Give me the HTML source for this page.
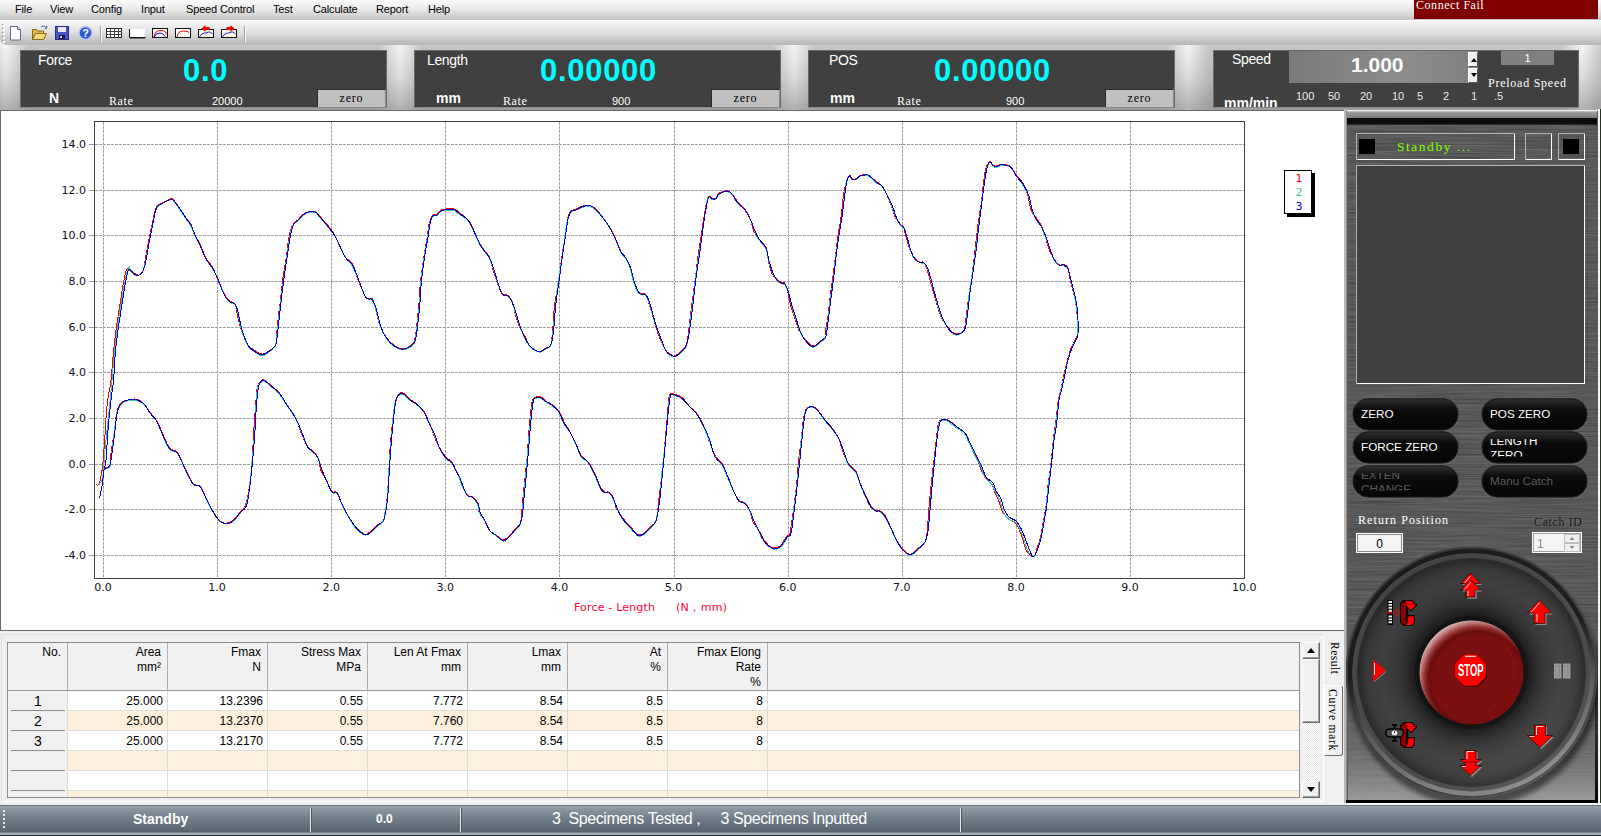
<!DOCTYPE html>
<html><head><meta charset="utf-8"><title>Tester</title>
<style>
*{box-sizing:border-box}
html,body{margin:0;padding:0}
body{width:1601px;height:836px;overflow:hidden;position:relative;background:#f0f0f0;font-family:"Liberation Sans",sans-serif;font-size:12px;color:#000}
.abs{position:absolute}
.mono{font-family:"Liberation Mono",monospace}
#menubar{left:0;top:0;width:1601px;height:20px;background:linear-gradient(#fbfbfb 0,#ececec 40%,#c4c4c4 100%)}
#menubar span{position:absolute;top:3px;font-size:11px;color:#000;white-space:nowrap;letter-spacing:-0.15px}
#toolbar{left:0;top:20px;width:1601px;height:25px;border-bottom-left-radius:7px;background:linear-gradient(#f6f6f6 0,#e2e2e2 45%,#b6b6b6 100%);border-top:1px solid #fff}
#cfail{left:1414px;top:0;width:184px;height:19px;background:#800000;color:#fff;font-size:12px;line-height:10px;padding-left:2px;letter-spacing:0.55px;font-family:'Liberation Serif',serif}
#panels{left:0;top:45px;width:1601px;height:65px;background:
 linear-gradient(90deg,rgba(120,120,120,0) 0,rgba(120,120,120,.38) 22px,rgba(120,120,120,.38) 372px,rgba(120,120,120,0) 394px) 6px 0/394px 65px repeat-x,
 linear-gradient(#f6f6f6 0,#f2f2f2 5px,#dadada 35px,#b6b6b6 61px,#b4b4b4 65px)}
.pn{position:absolute;top:5px;height:58px;background:#404040;border:1px solid #6a6a6a;border-bottom-color:#8a8a8a;color:#fff;overflow:hidden}
.pn .lab{position:absolute;top:1px;font-size:14px;letter-spacing:-0.35px}
.pn .big{position:absolute;top:2px;letter-spacing:0.7px;color:#00ffff;font-weight:bold;font-size:31px;white-space:nowrap}
.pn .unit{position:absolute;font-weight:bold;font-size:14px;top:39px}
.pn .rate{position:absolute;top:43px;font-size:12px;font-family:'Liberation Serif',serif;letter-spacing:0.6px}
.pn .rv{position:absolute;top:44px;font-size:11px}
.pn .zero{position:absolute;right:0;top:38px;width:69px;height:19px;background:#c0c0c0;border:1px solid #2a2a2a;border-right-color:#888;border-bottom-color:#888;color:#000;font-size:12px;font-family:'Liberation Serif',serif;letter-spacing:0.8px;text-align:center;line-height:16px}
#chartbox{left:0;top:110px;width:1344px;height:521px;background:#fff;border:1px solid #696969;border-right:none}
.chart{position:absolute;left:0;top:108px}
#status{left:0;top:805px;width:1601px;height:31px;background:linear-gradient(#707476 0,#707476 1px,#9aa5af 1px,#8a96a1 4px,#6f7c87 14px,#5a6772 26px,#56636e 27px,#9ea9b2 28px,#a6b0b9 30px,#30363a 30px,#202428 31px);color:#fff}
#status .sep{position:absolute;top:3px;width:2px;height:24px;background:#e4e8ec;border-right:1px solid #4a5660}
#status span{position:absolute;white-space:nowrap}
/* table */
#grid{left:7px;top:642px;width:1293px;height:156px;background:#fff;border:1px solid #8c8c8c;overflow:hidden}
#ghead{position:absolute;left:0;top:0;width:1293px;height:48px;background:#f1f1f1;border-bottom:1px solid #9a9a9a}
.hc{position:absolute;top:0;height:47px;width:100px;border-right:1px solid #b0b0b0;text-align:right;padding:2px 6px 0 0;font-size:12px;line-height:15px;color:#000}
.row{position:absolute;left:60px;width:1233px;height:20px;border-bottom:1px solid #dcdcdc}
.row.alt{background:#fdf0dc}
.rh{position:absolute;left:0;width:60px;height:20px;background:#f1f1f1;text-align:center;font-size:14px;line-height:21px}
.rh:after{content:"";position:absolute;left:3px;right:3px;bottom:0;border-bottom:1px solid #8c8c8c}
.vl{position:absolute;top:48px;width:1px;height:110px;background:#dcdcdc}
.cell{position:absolute;width:100px;text-align:right;padding-right:5px;font-size:12px;line-height:21px;height:20px}

.sb{width:18px;background:#f0f0f0;border:1px solid #fff;border-right-color:#6a6a6a;border-bottom-color:#6a6a6a;box-shadow:inset -1px -1px 0 #a0a0a0}
.tri{position:absolute;left:4px;top:5px;width:0;height:0;border-style:solid;border-color:transparent}
.tri.up{border-width:0 4px 5px 4px;border-bottom-color:#000}
.tri.dn{border-width:5px 4px 0 4px;border-top-color:#000}
.vt{writing-mode:vertical-rl;font-size:10px;width:18px;line-height:16px;padding-top:3px;letter-spacing:0}
.spb{width:10px;height:15px;background:#f0f0f0;border:1px solid #fff;border-right-color:#555;border-bottom-color:#555}
.sp{top:39px;font-size:11px;color:#e8e8e8}
.vtx{font-family:'Liberation Serif',serif;font-size:11.5px;line-height:12px;letter-spacing:0.5px;white-space:nowrap;transform-origin:0 0;transform:rotate(90deg);color:#000}
/* right panel */
#rp{left:1346px;top:111px;width:252px;height:692px;background:#484848;overflow:hidden}
.btn{position:absolute;width:106px;height:31px;border-radius:16px;background:linear-gradient(#2c2c2c 0,#050505 45%,#0a0a0a 100%);box-shadow:0 0 0 1px #3a3a3a,0 1px 1px 1px #6a6a6a,inset 0 2px 3px #000;color:#fff;font-size:12px;overflow:hidden;padding-left:9px;line-height:29px;white-space:nowrap}
.btn.dis{color:#5a5a5a}
.btn.two{line-height:14px;white-space:normal}
.sunk{position:absolute;border:1px solid #fff;border-top-color:#a0a0a0;border-left-color:#a0a0a0}
</style></head>
<body>
<div id="menubar" class="abs">
<span style="left:15px">File</span><span style="left:50px">View</span><span style="left:91px">Config</span><span style="left:141px">Input</span><span style="left:186px">Speed Control</span><span style="left:273px">Test</span><span style="left:313px">Calculate</span><span style="left:376px">Report</span><span style="left:428px">Help</span>
</div>
<div id="cfail" class="abs">Connect Fail</div>
<div id="toolbar" class="abs"><svg class="abs" style="left:0;top:0" width="260" height="26" viewBox="0 21 260 26"><rect x="3" y="25" width="2" height="2" fill="#fff"/><rect x="2" y="24" width="1" height="1" fill="#909090"/><rect x="3" y="29" width="2" height="2" fill="#fff"/><rect x="2" y="28" width="1" height="1" fill="#909090"/><rect x="3" y="33" width="2" height="2" fill="#fff"/><rect x="2" y="32" width="1" height="1" fill="#909090"/><rect x="3" y="37" width="2" height="2" fill="#fff"/><rect x="2" y="36" width="1" height="1" fill="#909090"/><rect x="3" y="41" width="2" height="2" fill="#fff"/><rect x="2" y="40" width="1" height="1" fill="#909090"/><path d="M10.500 26.500h7l3 3v10.500h-10z" fill="#fff" stroke="#5a6a8a"/><path d="M17.500 26.500v3h3" fill="#dde" stroke="#5a6a8a"/><path d="M32.500 39.500v-10h4l1 1.500h6v8.500z" fill="#e8b848" stroke="#8a6a20"/><path d="M32.500 39.500l3-6h11l-3 6z" fill="#f8d878" stroke="#8a6a20"/><path d="M41 27q3-2.500 5 0.500" fill="none" stroke="#4a6a9a"/><path d="M44.500 29l2.500-1-0.500-2.500" fill="none" stroke="#4a6a9a"/><rect x="55.500" y="26.500" width="13" height="13" fill="#4a52c8" stroke="#2a2a88"/><rect x="58" y="27" width="8" height="5" fill="#e8e8f4"/><rect x="59" y="35" width="6" height="4" fill="#181830"/><rect x="60" y="36" width="2" height="2" fill="#d8d8e8"/><circle cx="85.500" cy="33" r="6.500" fill="#2a5ad8" stroke="#b8c8f0" stroke-width="1.500"/><text x="85.500" y="37" text-anchor="middle" font-family="Liberation Sans,sans-serif" font-weight="bold" font-size="11" fill="#fff">?</text><rect x="101" y="26" width="1" height="16" fill="#f8f8f8"/><rect x="100" y="26" width="1" height="16" fill="#a0a0a0"/><rect x="245" y="26" width="1" height="16" fill="#f8f8f8"/><rect x="244" y="26" width="1" height="16" fill="#a0a0a0"/><rect x="106.500" y="28.500" width="15" height="9" fill="#fff" stroke="#202020"/><path d="M106 31.500h16M106 34.500h16M110.500 28v10M114.500 28v10M118.500 28v10" stroke="#404040" fill="none"/><rect x="130" y="29" width="15" height="9" fill="#fff"/><path d="M129.500 29v8.500h16" stroke="#101010" fill="none" stroke-width="1"/><path d="M130 38h15" stroke="#101010"/><rect x="152.500" y="28.500" width="15" height="9" fill="#fff" stroke="#101010"/><path d="M154 37q1-7 7-6.500t5 4" stroke="#e00000" fill="none"/><path d="M154 37.500q2-5 6-4.500t5 3.500" stroke="#1010c0" fill="none"/><rect x="175.500" y="28.500" width="15" height="9" fill="#fff" stroke="#101010"/><path d="M177 37q1-6 6-6t6 1.500" stroke="#e00000" fill="none"/><rect x="198.5" y="29.500" width="15" height="8" fill="#fdf6e4" stroke="#101010"/><path d="M199.5 37q2-4 5-4t4-1 4 2" stroke="#2030d0" fill="none"/><path d="M201.5 28.500l4-3.500v2h4v3h-4v2z" fill="#f00000"/><rect x="221.5" y="29.500" width="15" height="8" fill="#fdf6e4" stroke="#101010"/><path d="M222.5 37q2-4 5-4t4-1 4 2" stroke="#2030d0" fill="none"/><path d="M234.5 28.500l-4-3.500v2h-4v3h4v2z" fill="#f00000"/></svg></div>
<div id="panels" class="abs">
 <div class="pn" style="left:20px;width:367px"><span class="lab" style="left:17px">Force</span><span class="big" style="left:162px">0.0</span><span class="unit" style="left:28px">N</span><span class="rate mono" style="left:88px">Rate</span><span class="rv" style="left:191px">20000</span><div class="zero mono">zero</div></div>
 <div class="pn" style="left:414px;width:367px"><span class="lab" style="left:12px">Length</span><span class="big" style="left:125px">0.00000</span><span class="unit" style="left:21px">mm</span><span class="rate mono" style="left:88px">Rate</span><span class="rv" style="left:197px">900</span><div class="zero mono">zero</div></div>
 <div class="pn" style="left:808px;width:367px"><span class="lab" style="left:20px">POS</span><span class="big" style="left:125px">0.00000</span><span class="unit" style="left:21px">mm</span><span class="rate mono" style="left:88px">Rate</span><span class="rv" style="left:197px">900</span><div class="zero mono">zero</div></div>
 <div class="pn" style="left:1213px;width:366px"><span class="lab" style="left:18px;top:0">Speed</span>
<div class="abs" style="left:75px;top:0;width:189px;height:32px;background:linear-gradient(90deg,#7a7a7a,#8c8c8c 60%,#808080)"></div>
<span class="abs" style="left:137px;top:2px;font-weight:bold;font-size:21px;color:#fff">1.000</span>
<div class="abs spb" style="left:254px;top:1px"><i class="tri up" style="left:2px;top:5px;border-width:0 3px 4px 3px"></i></div>
<div class="abs spb" style="left:254px;top:17px"><i class="tri dn" style="left:2px;top:4px;border-width:4px 3px 0 3px"></i></div>
<div class="abs" style="left:287px;top:0;width:53px;height:14px;background:#808080;color:#fff;font-size:11px;text-align:center;line-height:14px">1</div>
<span class="abs" style="left:274px;top:25px;font-size:12px;font-family:'Liberation Serif',serif;letter-spacing:0.75px;color:#fff;white-space:nowrap">Preload Speed</span>
<span class="abs" style="left:10px;top:44px;font-weight:bold;font-size:14px;color:#fff">mm/min</span>
<span class="abs sp" style="left:82px">100</span><span class="abs sp" style="left:114px">50</span><span class="abs sp" style="left:146px">20</span><span class="abs sp" style="left:178px">10</span><span class="abs sp" style="left:203px">5</span><span class="abs sp" style="left:229px">2</span><span class="abs sp" style="left:257px">1</span><span class="abs sp" style="left:280px">.5</span></div>
</div>
<div id="chartbox" class="abs"></div>
<svg class="chart" width="1345" height="525" viewBox="0 108 1345 525">
<style>.g{stroke:#a0a0a0;stroke-dasharray:3 1;shape-rendering:crispEdges}.al{font:11px "DejaVu Sans","Liberation Sans",sans-serif;fill:#101020}</style>
<g shape-rendering="crispEdges"><line x1="103.5" y1="122" x2="103.5" y2="578" class="g"/>
<line x1="217.5" y1="122" x2="217.5" y2="578" class="g"/>
<line x1="331.5" y1="122" x2="331.5" y2="578" class="g"/>
<line x1="445.5" y1="122" x2="445.5" y2="578" class="g"/>
<line x1="559.5" y1="122" x2="559.5" y2="578" class="g"/>
<line x1="674.5" y1="122" x2="674.5" y2="578" class="g"/>
<line x1="788.5" y1="122" x2="788.5" y2="578" class="g"/>
<line x1="902.5" y1="122" x2="902.5" y2="578" class="g"/>
<line x1="1016.5" y1="122" x2="1016.5" y2="578" class="g"/>
<line x1="1130.5" y1="122" x2="1130.5" y2="578" class="g"/>
<line x1="95" y1="555.5" x2="1244" y2="555.5" class="g"/>
<line x1="89" y1="555.5" x2="95" y2="555.5" stroke="#a0a0a0"/>
<line x1="95" y1="509.5" x2="1244" y2="509.5" class="g"/>
<line x1="89" y1="509.5" x2="95" y2="509.5" stroke="#a0a0a0"/>
<line x1="95" y1="464.5" x2="1244" y2="464.5" class="g"/>
<line x1="89" y1="464.5" x2="95" y2="464.5" stroke="#a0a0a0"/>
<line x1="95" y1="418.5" x2="1244" y2="418.5" class="g"/>
<line x1="89" y1="418.5" x2="95" y2="418.5" stroke="#a0a0a0"/>
<line x1="95" y1="372.5" x2="1244" y2="372.5" class="g"/>
<line x1="89" y1="372.5" x2="95" y2="372.5" stroke="#a0a0a0"/>
<line x1="95" y1="327.5" x2="1244" y2="327.5" class="g"/>
<line x1="89" y1="327.5" x2="95" y2="327.5" stroke="#a0a0a0"/>
<line x1="95" y1="281.5" x2="1244" y2="281.5" class="g"/>
<line x1="89" y1="281.5" x2="95" y2="281.5" stroke="#a0a0a0"/>
<line x1="95" y1="235.5" x2="1244" y2="235.5" class="g"/>
<line x1="89" y1="235.5" x2="95" y2="235.5" stroke="#a0a0a0"/>
<line x1="95" y1="190.5" x2="1244" y2="190.5" class="g"/>
<line x1="89" y1="190.5" x2="95" y2="190.5" stroke="#a0a0a0"/>
<line x1="95" y1="144.5" x2="1244" y2="144.5" class="g"/>
<line x1="89" y1="144.5" x2="95" y2="144.5" stroke="#a0a0a0"/>
<rect x="94.5" y="121.5" width="1150" height="457" fill="none" stroke="#404040"/></g>
<g shape-rendering="crispEdges"><polyline points="96.0,484.4 96.8,484.9 97.9,485.3 99.0,484.0 100.2,480.1 101.4,474.5 102.4,468.0 103.1,461.1 103.7,453.3 104.4,444.0 105.2,431.9 106.0,418.3 107.0,406.0 108.3,396.3 109.8,388.0 111.0,380.0 111.8,372.3 112.3,364.9 113.0,357.0 113.9,348.3 114.9,339.1 116.0,330.0 117.3,321.1 118.7,312.3 120.0,304.0 121.3,296.0 122.5,288.4 123.6,282.0 124.6,276.8 125.5,272.8 126.5,270.0 127.5,268.7 128.5,268.6 129.8,269.1 131.6,270.4 133.5,272.4 135.3,273.9 136.7,274.7 138.0,275.1 139.2,274.9 140.6,274.2 142.0,272.9 143.2,270.9 143.9,268.3 144.4,264.9 145.1,260.3 146.3,253.8 147.7,246.0 149.2,238.4 150.6,231.0 152.2,223.8 153.5,217.6 154.6,212.9 155.5,209.1 156.7,206.3 158.3,204.7 160.3,203.9 162.4,203.1 165.0,201.6 167.8,200.0 170.1,199.0 171.3,198.5 171.9,198.5 173.0,199.4 175.0,201.9 177.5,205.2 179.9,208.6 182.0,211.8 184.1,215.0 186.1,217.9 187.9,220.3 189.6,222.4 191.2,224.9 192.3,228.3 193.3,232.0 194.5,235.4 196.0,238.0 197.8,240.2 199.7,243.2 201.8,248.2 204.1,254.0 206.3,259.0 208.4,261.9 210.4,264.0 212.4,266.6 214.0,270.2 215.6,274.3 217.4,278.7 219.7,284.1 222.3,289.9 224.6,294.6 226.5,297.6 228.1,299.6 229.8,301.2 231.8,302.2 233.8,302.8 235.3,304.0 236.0,306.0 236.3,308.6 236.8,312.3 238.0,317.5 239.4,323.7 241.1,329.7 243.2,335.3 245.5,340.6 247.8,344.8 250.0,347.3 252.1,348.8 254.3,350.1 256.9,351.8 259.6,353.4 262.1,354.1 264.2,353.8 266.1,352.8 268.2,351.4 270.7,349.9 273.4,348.0 275.3,346.0 276.1,344.0 276.1,341.9 276.2,338.4 276.7,333.0 277.4,326.3 278.0,319.6 278.7,313.8 279.5,308.0 280.3,301.6 281.1,294.0 282.0,285.8 282.9,277.9 284.0,270.9 285.2,264.2 286.3,257.7 287.2,250.9 287.9,244.2 288.8,238.3 289.7,233.6 290.7,229.7 292.0,226.4 293.9,223.7 296.0,221.6 298.4,219.4 300.7,216.9 303.3,214.4 306.0,212.6 309.1,211.6 312.3,211.3 315.1,211.6 316.9,212.6 318.2,214.3 320.1,216.7 323.3,220.2 327.1,224.5 330.4,228.6 332.5,231.5 334.0,234.1 335.9,237.7 338.7,243.7 341.8,250.7 344.8,256.4 347.5,259.4 350.1,261.1 352.4,263.6 354.1,267.6 355.5,272.3 357.2,277.6 359.7,283.8 362.6,290.6 364.9,295.6 366.4,297.9 367.5,298.4 368.6,298.7 369.8,298.5 371.0,298.1 372.1,298.7 373.1,300.7 374.1,303.8 375.3,308.0 376.8,313.8 378.4,320.7 380.4,326.9 382.8,331.9 385.5,336.2 388.2,339.8 390.6,342.5 393.0,344.5 395.6,346.2 398.3,347.7 401.2,348.8 404.2,349.0 407.3,347.8 410.4,345.7 412.8,343.5 414.1,341.7 414.7,339.7 415.3,336.8 415.9,332.6 416.5,327.5 417.1,321.8 417.7,315.7 418.4,309.0 419.1,302.1 419.5,295.0 420.0,287.7 420.6,279.9 421.8,271.1 423.2,261.8 424.4,253.6 425.5,247.3 426.4,242.1 427.3,237.2 427.9,232.3 428.3,227.8 429.0,223.8 430.1,220.3 431.4,217.4 432.7,215.3 434.0,214.6 435.3,214.7 436.7,214.5 438.2,213.2 439.7,211.5 441.2,210.2 442.6,209.5 444.0,209.2 445.8,209.0 448.5,208.8 451.5,208.7 454.3,209.1 456.5,210.1 458.4,211.6 460.3,213.3 462.5,215.0 464.8,216.8 466.9,218.7 468.5,220.3 469.9,222.0 471.3,224.5 473.1,228.3 474.9,232.9 476.8,237.2 478.4,240.8 480.1,244.1 482.0,247.3 484.4,250.4 487.1,253.4 489.3,256.9 490.7,260.9 491.8,265.3 492.9,269.8 494.4,274.3 495.9,278.9 497.5,283.1 499.0,287.1 500.6,290.7 502.3,293.4 504.1,294.5 505.9,294.7 507.7,295.4 509.3,296.9 510.9,298.8 512.3,301.3 513.3,304.7 514.1,308.8 515.1,312.9 516.2,317.2 517.6,321.7 519.1,325.9 521.1,329.9 523.4,333.7 525.4,337.2 526.9,340.5 528.1,343.5 529.6,345.9 531.4,347.7 533.4,349.0 535.3,350.0 536.9,350.9 538.4,351.5 539.9,351.6 541.7,350.8 543.6,349.5 545.4,348.3 547.2,347.6 548.9,347.0 550.2,345.9 551.0,344.1 551.4,341.9 551.7,339.0 552.2,335.4 552.6,331.0 553.0,325.9 553.5,319.5 553.9,312.4 554.6,305.6 555.4,299.4 556.4,293.4 557.3,287.8 558.0,283.1 558.7,278.7 559.5,273.6 560.4,266.9 561.5,259.5 562.6,252.2 563.6,245.2 564.7,238.4 565.6,232.4 566.3,227.2 566.9,222.8 567.6,219.1 568.4,215.9 569.4,213.3 570.6,211.4 572.0,210.3 573.7,209.9 575.7,209.4 578.0,208.2 580.6,206.9 583.1,206.0 585.8,205.5 588.4,205.5 590.9,205.9 593.1,207.0 595.1,208.5 597.1,210.4 599.3,212.9 601.6,215.9 603.8,218.9 605.9,221.8 608.0,224.8 610.0,227.8 611.7,230.7 613.2,233.7 614.9,237.3 616.9,242.1 619.0,247.4 621.0,251.8 622.7,254.3 624.2,255.7 625.7,257.8 627.4,261.2 629.1,265.3 630.6,269.3 631.6,273.1 632.5,276.9 633.5,280.6 635.0,284.4 636.7,288.1 638.1,290.9 639.0,292.3 639.6,292.9 640.6,293.3 642.2,293.5 644.1,293.6 645.8,294.6 647.0,296.8 647.9,299.9 649.1,304.0 650.8,309.4 652.7,315.6 654.4,321.6 655.9,326.5 657.2,331.1 658.8,335.7 660.9,340.8 663.4,346.0 665.7,350.2 667.8,352.6 669.7,353.9 671.4,354.9 672.6,355.7 673.5,356.1 674.6,356.0 676.2,355.2 678.0,354.0 679.8,352.4 681.9,350.6 684.1,348.4 685.9,345.7 687.0,342.2 687.7,338.2 688.3,333.9 688.9,329.4 689.4,324.7 689.9,319.8 690.5,315.1 691.1,310.1 691.9,304.0 693.0,295.9 694.2,286.6 695.4,277.9 696.3,270.8 697.0,264.3 697.8,257.7 698.8,250.6 700.0,243.4 701.1,236.1 702.2,228.5 703.4,220.8 704.5,213.9 705.5,208.0 706.5,202.9 707.5,199.1 708.2,197.1 708.8,196.5 709.5,196.4 710.6,196.9 711.8,198.0 713.0,198.7 714.0,198.9 715.0,198.7 715.9,198.1 716.8,196.7 717.7,194.9 719.0,193.3 720.9,192.3 723.1,191.6 725.0,191.1 726.4,190.8 727.5,190.7 728.6,191.1 730.0,192.0 731.5,193.3 732.9,194.9 734.3,196.8 735.6,199.0 737.4,201.4 739.9,204.0 742.8,206.8 745.4,209.8 747.4,213.2 749.2,216.9 750.8,220.5 751.9,224.2 752.8,227.9 753.9,231.3 755.4,234.0 757.2,236.4 759.1,238.9 761.6,241.6 764.2,244.4 766.3,247.7 767.3,251.9 767.8,256.5 768.4,261.1 769.4,265.4 770.6,269.6 771.8,273.1 773.3,275.7 774.9,277.6 776.6,279.2 778.2,280.5 779.8,281.4 781.2,282.1 782.5,282.4 783.6,282.4 784.6,283.2 785.6,284.9 786.6,287.4 787.5,290.7 788.6,295.4 789.6,301.1 790.8,306.3 792.1,310.5 793.4,314.4 794.9,318.3 796.3,322.7 797.7,327.3 799.4,331.3 801.3,334.5 803.3,337.2 805.4,339.6 807.4,341.9 809.5,343.8 811.3,345.1 812.7,345.8 813.9,346.0 815.2,345.6 816.8,344.5 818.5,342.8 820.2,341.2 822.2,339.9 824.3,338.6 825.8,336.9 826.1,335.1 825.8,332.9 825.8,329.8 826.5,325.3 827.4,319.9 828.3,314.3 828.8,308.9 829.4,303.4 830.0,297.7 830.8,291.8 831.7,285.6 832.6,279.1 833.5,272.0 834.5,264.4 835.4,256.9 836.3,249.4 837.2,241.9 838.1,234.9 839.1,228.8 840.1,223.2 841.1,216.9 842.0,209.0 842.9,200.3 843.8,193.0 844.7,187.9 845.7,184.0 846.6,180.9 847.7,178.2 848.8,176.2 849.8,175.2 850.6,175.9 851.3,177.5 852.2,178.8 853.4,179.1 854.8,179.0 856.2,178.6 857.4,177.7 858.6,176.6 860.0,175.7 861.7,175.0 863.7,174.5 865.4,174.2 866.4,174.2 867.3,174.5 868.6,175.4 871.0,177.1 873.8,179.5 876.4,181.6 878.5,183.0 880.3,184.2 881.9,185.7 883.3,187.5 884.4,189.6 885.7,192.3 887.4,196.1 889.1,200.5 890.9,205.1 892.6,209.8 894.3,214.7 896.0,218.8 897.8,221.5 899.6,223.4 901.2,225.0 902.3,225.9 903.1,226.4 903.8,227.7 904.5,230.3 905.2,233.6 906.1,237.3 907.4,241.7 908.8,246.6 910.3,250.8 911.7,253.8 913.2,256.2 914.7,258.1 916.5,259.8 918.3,261.1 920.0,262.0 921.3,262.2 922.5,262.0 923.7,262.4 924.8,263.9 925.9,266.2 927.0,269.2 928.3,273.4 929.5,278.4 930.9,283.4 932.2,288.1 933.6,292.9 935.2,298.1 937.0,304.5 939.0,311.4 941.2,317.3 943.6,321.6 946.1,324.9 948.3,327.6 949.7,329.6 950.8,331.1 952.0,332.1 953.6,333.1 955.4,333.7 957.3,333.9 959.4,333.6 961.5,332.8 963.2,331.6 964.2,329.9 964.7,327.8 965.2,324.8 965.8,320.6 966.3,315.6 967.0,310.2 967.7,304.4 968.6,298.2 969.4,292.4 970.0,288.1 970.7,284.2 971.5,278.8 972.6,270.4 973.8,260.5 974.9,250.8 975.9,242.0 976.9,233.5 977.9,225.2 979.1,217.0 980.4,209.1 981.5,201.4 982.4,193.5 983.2,185.8 984.0,179.3 984.6,174.6 985.2,171.0 986.0,167.9 987.3,164.9 988.9,162.5 990.2,161.2 991.1,161.9 991.8,163.7 992.6,165.3 993.6,165.8 994.6,166.0 995.8,166.0 997.2,165.7 998.7,165.1 1000.1,164.7 1001.2,164.5 1002.3,164.4 1003.6,164.4 1005.3,164.6 1007.3,165.0 1008.9,165.5 1010.0,166.1 1010.7,166.9 1011.7,168.2 1013.4,170.6 1015.4,173.6 1017.4,176.5 1019.3,178.6 1021.2,180.6 1023.0,183.2 1024.8,187.1 1026.5,191.6 1028.0,196.1 1029.0,200.7 1029.8,205.3 1030.9,209.3 1032.5,212.7 1034.5,215.5 1036.4,218.2 1038.1,220.6 1039.8,222.7 1041.4,225.4 1042.8,229.0 1044.2,233.1 1045.4,237.2 1046.6,241.3 1047.7,245.3 1049.0,249.2 1050.6,252.7 1052.4,256.0 1054.1,258.8 1055.7,261.3 1057.2,263.4 1058.8,264.8 1060.7,265.1 1062.7,264.7 1064.4,264.7 1065.8,265.3 1067.0,266.3 1068.0,268.2 1068.8,271.3 1069.4,275.3 1070.2,279.9 1071.5,285.0 1073.0,290.6 1074.4,296.2 1075.4,301.1 1076.3,306.0 1076.9,311.7 1077.3,319.3 1077.5,327.6 1077.3,334.1 1076.8,337.4 1075.9,338.8 1074.9,340.4 1073.8,342.5 1072.6,344.8 1071.3,347.7 1070.1,351.2 1068.8,355.3 1067.6,359.7 1066.4,364.4 1065.2,369.3 1064.0,374.2 1063.1,378.9 1062.2,383.6 1061.3,388.0 1060.3,391.9 1059.3,395.5 1058.3,400.0 1057.5,406.2 1056.7,413.4 1056.0,419.7 1055.4,424.5 1054.7,428.6 1054.2,432.2 1053.9,434.9 1053.6,437.1 1053.2,441.0 1052.5,448.0 1051.7,456.6 1050.8,464.9 1049.9,472.0 1048.9,478.8 1048.0,485.5 1047.3,492.5 1046.8,499.5 1046.1,505.9 1045.3,511.0 1044.4,515.5 1043.5,520.4 1042.5,526.2 1041.5,532.4 1040.4,537.9 1039.3,542.0 1038.1,545.3 1037.0,548.3 1036.2,551.2 1035.5,553.6 1034.7,555.4 1033.8,556.2 1032.9,556.3 1032.2,556.3 1031.9,556.5 1031.7,556.7 1031.2,556.2 1029.7,554.8 1027.9,552.8 1026.2,550.3 1025.0,547.1 1023.9,543.4 1022.9,539.8 1021.7,536.2 1020.5,532.7 1019.1,529.5 1017.7,526.7 1016.1,524.4 1014.3,522.4 1012.2,521.0 1009.9,519.9 1007.7,518.4 1005.5,516.0 1003.5,513.3 1001.7,510.3 1000.5,507.0 999.6,503.5 998.6,500.2 997.3,497.3 996.0,494.7 994.7,492.0 993.7,489.1 992.7,486.3 991.5,483.6 989.5,481.4 987.3,479.5 985.2,477.2 983.5,474.5 981.9,471.6 980.5,468.3 979.2,464.9 978.1,461.3 976.6,457.3 974.3,452.7 971.7,447.8 969.4,443.3 967.7,439.6 966.3,436.4 964.6,433.5 962.2,431.0 959.5,428.8 956.8,426.7 954.2,424.4 951.6,422.3 949.2,420.6 947.0,419.6 945.0,419.1 943.1,419.2 941.3,419.7 939.7,420.8 938.4,423.2 937.5,427.3 937.0,432.7 936.3,439.0 935.5,446.4 934.6,454.7 933.6,463.0 932.7,470.8 931.8,478.7 930.9,487.0 930.0,496.5 929.1,506.4 928.4,515.0 928.0,521.4 927.7,526.4 927.3,530.9 926.8,535.2 926.2,538.8 925.1,542.0 923.1,544.4 920.7,546.4 918.4,548.2 916.2,550.3 914.2,552.3 912.3,553.7 910.6,554.2 909.1,554.0 907.6,553.4 906.0,552.5 904.4,551.0 902.8,549.2 900.9,546.9 899.0,544.2 897.0,540.9 894.9,536.9 892.8,532.2 890.8,527.9 889.2,524.0 887.8,520.4 886.2,517.2 884.2,514.6 882.2,512.5 880.3,511.0 878.9,510.7 877.7,510.9 876.4,510.7 874.7,509.8 873.0,508.4 871.2,506.4 869.6,503.8 868.0,500.6 866.3,496.9 864.0,492.5 861.6,487.6 859.5,482.9 858.3,478.8 857.5,474.9 856.2,471.5 854.0,469.0 851.2,466.8 848.6,464.1 846.5,460.4 844.6,456.1 842.8,451.7 841.4,447.3 840.3,442.9 838.7,438.5 836.4,434.3 833.7,430.2 831.2,426.6 829.0,424.0 827.0,421.9 824.9,419.7 822.8,416.9 820.7,414.0 818.8,411.5 817.2,409.5 815.7,407.9 814.2,406.9 812.6,406.4 810.9,406.5 809.3,406.9 807.9,407.6 806.5,408.6 805.4,410.5 804.5,413.2 803.8,416.7 803.1,421.0 802.5,426.2 802.0,432.1 801.3,438.8 800.4,446.3 799.3,454.5 798.4,462.7 797.7,470.8 797.1,478.8 796.5,486.7 795.5,494.4 794.5,501.9 793.6,508.7 792.8,514.7 792.0,520.0 791.3,524.7 790.7,528.8 790.2,532.2 789.5,534.7 788.7,535.5 787.8,535.4 786.6,536.2 784.8,539.0 782.8,542.7 780.7,545.5 778.6,546.9 776.5,547.5 774.6,547.7 773.0,547.7 771.5,547.4 770.0,546.5 768.1,544.9 766.1,542.7 764.2,540.1 762.4,537.1 760.7,533.8 758.9,530.5 756.8,527.5 754.6,524.6 752.8,521.4 751.6,517.7 750.8,513.7 749.7,510.2 748.3,507.3 746.7,504.8 745.0,502.8 743.1,501.9 741.1,501.5 739.1,500.4 737.3,498.0 735.5,494.9 733.7,491.1 731.6,486.7 729.4,481.7 727.4,476.8 725.7,472.1 724.1,467.5 722.3,463.5 720.1,461.1 717.8,459.4 715.4,456.4 712.9,450.9 710.3,444.2 708.0,437.8 706.0,432.3 704.2,427.2 702.3,422.7 700.2,418.7 698.0,415.2 695.9,412.2 693.7,409.9 691.4,408.1 689.2,406.0 686.8,403.1 684.5,400.0 682.1,397.5 679.5,395.9 676.8,394.9 674.6,394.2 672.9,393.6 671.7,393.3 670.7,393.5 669.9,394.3 669.3,395.6 668.8,398.1 668.4,402.3 668.0,407.6 667.6,413.7 667.0,420.6 666.3,428.3 665.6,436.0 664.9,443.6 664.2,451.1 663.5,458.4 662.9,465.0 662.3,471.2 661.6,477.6 660.7,484.6 659.8,491.7 659.0,498.1 658.5,503.2 658.1,507.6 657.6,511.6 657.0,515.5 656.4,519.0 655.4,521.9 654.1,523.8 652.4,525.0 650.7,526.5 648.8,528.6 646.8,530.9 644.9,532.7 643.0,533.9 641.1,534.7 639.4,534.9 637.9,534.4 636.6,533.5 635.2,532.2 633.7,530.7 632.2,528.8 630.3,526.6 627.8,523.8 625.0,520.7 622.4,517.4 620.0,514.3 617.9,511.0 616.1,507.8 615.0,504.2 614.2,500.6 613.3,497.5 611.9,495.2 610.3,493.5 608.8,492.3 607.5,491.9 606.4,492.2 605.2,492.0 603.9,491.4 602.6,490.4 601.2,488.4 599.5,484.9 597.7,480.5 596.0,476.2 594.3,472.5 592.7,469.1 591.2,466.1 589.8,464.0 588.5,462.4 587.0,460.8 585.1,459.1 583.1,457.5 581.2,455.2 579.3,451.9 577.6,447.9 575.8,443.9 573.9,439.8 572.0,435.7 570.1,431.9 568.2,428.6 566.2,425.6 564.3,422.5 562.7,418.9 561.2,415.1 559.4,411.8 557.0,408.9 554.4,406.5 551.9,404.4 549.6,403.0 547.5,402.1 545.6,401.1 544.1,399.7 542.7,398.2 541.4,397.2 540.0,396.7 538.5,396.5 537.1,396.8 535.4,397.3 533.8,398.1 532.4,400.1 531.6,403.5 531.1,408.1 530.6,413.6 529.9,420.5 529.1,428.5 528.5,436.1 528.1,442.7 527.7,448.9 527.3,455.6 526.6,463.0 525.7,470.9 525.0,478.4 524.2,485.3 523.6,491.9 522.9,498.1 522.4,504.0 522.0,509.5 521.5,514.3 521.2,518.1 520.8,521.2 520.1,523.8 518.7,525.9 516.9,527.5 515.0,529.3 513.0,531.6 510.8,534.1 508.7,536.2 506.9,537.9 505.2,539.3 503.3,539.8 500.8,538.8 498.1,536.8 495.6,535.0 493.5,533.8 491.6,532.7 489.7,530.9 488.0,527.8 486.3,524.1 484.6,520.5 482.6,517.6 480.5,515.0 479.0,512.3 478.5,509.4 478.6,506.4 478.1,503.7 476.5,501.1 474.3,498.7 472.2,496.9 470.7,496.3 469.3,496.3 467.9,495.6 466.3,493.9 464.7,491.5 463.2,488.6 461.8,485.3 460.6,481.5 459.5,478.1 458.4,475.3 457.4,472.8 456.3,470.3 455.0,467.6 453.7,465.0 452.0,462.5 449.9,460.4 447.5,458.5 445.2,456.2 443.0,453.3 440.9,450.0 438.9,446.5 437.1,442.9 435.4,439.0 433.8,435.0 432.3,430.9 430.8,426.6 429.2,422.5 427.6,418.6 426.0,415.0 424.1,411.6 421.8,408.7 419.2,406.1 416.7,403.8 414.5,402.1 412.4,400.8 410.4,399.4 408.5,397.6 406.6,395.7 404.9,394.2 403.4,393.3 402.0,392.8 400.7,392.8 399.5,393.5 398.4,394.8 397.4,396.8 396.4,399.2 395.4,402.4 394.5,406.4 393.7,411.7 393.0,417.8 392.3,424.4 391.6,431.0 390.9,438.0 390.2,445.9 389.6,455.7 389.1,466.5 388.6,476.4 388.1,484.5 387.7,491.7 387.2,498.0 386.5,503.4 385.8,507.9 385.0,511.9 384.6,515.5 384.3,518.5 383.4,520.9 381.9,522.6 379.9,523.7 377.8,524.9 375.8,526.6 373.7,528.5 371.7,530.2 369.9,531.9 368.1,533.5 366.2,534.4 364.2,534.0 362.1,532.8 360.0,531.3 357.9,529.5 355.8,527.4 353.6,524.8 351.3,521.4 349.0,517.5 346.8,513.5 344.7,509.5 342.6,505.5 340.9,501.8 339.5,498.1 338.5,494.8 337.2,492.4 335.5,491.7 333.5,492.1 331.6,491.4 330.1,488.7 328.6,485.0 326.9,481.2 324.9,477.6 322.7,474.0 320.9,470.2 319.9,466.1 319.2,461.7 318.2,458.0 316.5,455.2 314.4,453.0 312.4,450.9 310.6,449.3 308.8,447.8 306.9,445.2 304.6,440.8 302.2,435.3 300.0,430.0 298.3,425.3 296.9,420.9 295.0,416.6 292.5,412.5 289.6,408.7 286.9,404.9 284.5,401.0 282.3,397.1 279.8,393.5 276.7,390.3 273.4,387.4 270.3,384.8 267.8,382.6 265.6,380.8 263.8,379.7 262.7,379.4 262.1,379.8 261.3,380.7 260.0,382.0 258.5,383.8 257.3,387.0 256.6,392.1 256.1,398.6 255.6,405.7 255.0,413.2 254.4,421.4 253.8,429.7 253.3,438.5 252.9,447.6 252.4,456.0 251.9,463.4 251.3,470.1 250.6,476.3 250.0,481.8 249.4,486.8 248.6,491.6 247.7,496.6 246.6,501.5 245.3,505.6 243.7,508.4 241.9,510.4 239.9,512.4 237.9,514.9 235.7,517.5 233.6,519.6 231.6,521.2 229.6,522.3 227.6,523.0 225.6,523.2 223.6,522.9 221.8,522.2 220.2,521.2 218.7,519.6 216.9,517.3 214.6,513.9 212.0,509.7 209.6,505.5 207.6,501.4 205.8,497.3 204.1,493.7 202.7,490.6 201.5,487.8 200.0,485.8 198.0,485.1 195.9,485.1 193.8,484.2 191.9,481.8 190.1,478.5 188.2,474.8 186.2,470.6 184.0,466.1 182.0,461.8 180.3,458.0 178.8,454.5 177.0,451.8 174.9,450.4 172.7,449.9 170.7,449.1 169.4,447.9 168.4,446.3 167.1,443.9 165.3,439.9 163.3,435.1 161.4,430.5 159.6,426.7 157.9,423.1 156.1,419.9 154.3,417.3 152.3,415.1 150.3,412.6 148.2,409.6 146.1,406.3 143.9,403.6 141.6,401.6 139.1,400.2 136.7,399.3 134.5,399.0 132.4,399.2 130.2,399.6 127.7,400.0 125.2,400.6 123.0,401.5 121.4,402.8 120.0,404.5 118.9,406.5 117.9,408.5 117.2,410.8 116.5,414.0 115.8,418.6 115.3,424.1 114.6,429.7 113.8,435.2 112.9,440.7 112.0,446.0 111.3,451.2 110.6,456.2 110.1,460.3 110.1,463.1 110.2,465.0 109.7,466.3 108.0,467.3 105.7,467.8 104.1,468.1" fill="none" stroke="#ff0000" stroke-width="1"/>
<polyline points="99.0,484.4 99.8,483.5 101.0,482.0 102.0,480.0 102.6,477.5 103.1,474.3 103.5,470.0 103.9,464.7 104.3,458.4 105.0,450.0 106.2,438.4 107.6,424.9 109.0,412.0 110.1,400.6 111.1,389.8 112.0,380.0 112.7,371.8 113.3,364.6 114.0,357.0 114.9,348.3 115.9,339.1 117.0,330.0 118.3,321.1 119.6,312.3 121.0,304.0 122.3,296.0 123.6,288.5 124.8,282.0 126.0,276.6 127.0,272.2 128.0,269.0 128.8,267.3 129.5,266.9 130.0,267.0 129.9,267.6 129.6,268.8 129.8,270.2 131.1,271.9 133.0,273.9 134.8,275.3 136.2,275.8 137.4,275.8 138.7,275.3 140.1,274.5 141.5,273.2 142.8,271.2 143.8,268.4 144.6,264.9 145.7,260.2 147.0,253.6 148.5,245.8 149.9,238.1 151.3,230.8 152.7,223.6 153.9,217.6 154.9,213.3 155.7,210.3 156.8,207.9 158.2,206.1 159.7,205.0 161.7,203.9 164.4,202.4 167.5,200.9 170.0,199.9 171.3,199.3 171.9,199.2 173.0,200.1 175.0,202.7 177.5,206.3 179.8,209.9 181.9,213.0 183.8,216.0 185.7,218.8 187.5,221.2 189.2,223.4 190.7,225.9 192.2,228.8 193.4,232.0 194.8,235.1 196.1,237.9 197.5,240.7 199.2,244.1 201.4,249.0 203.9,254.5 206.2,259.2 208.1,262.5 209.9,265.0 211.8,267.8 213.8,271.0 215.8,274.5 217.9,278.6 220.2,284.2 222.5,290.4 224.7,295.5 226.5,298.7 228.2,300.6 229.9,302.2 231.7,303.2 233.4,303.8 234.9,304.9 235.9,306.4 236.6,308.5 237.5,311.7 238.6,316.9 239.8,323.4 241.4,329.7 243.4,335.6 245.7,341.3 247.9,345.8 249.8,348.5 251.5,349.9 253.7,351.3 256.4,353.2 259.5,355.0 262.4,355.9 264.5,355.4 266.4,353.9 268.4,352.3 270.7,350.7 273.1,349.0 274.9,346.9 275.8,344.6 276.2,341.9 276.6,338.2 277.2,332.7 277.9,326.1 278.5,319.6 279.1,314.0 279.7,308.5 280.5,302.2 281.6,294.5 282.8,286.0 283.9,278.1 284.8,271.1 285.7,264.6 286.6,258.0 287.6,251.1 288.6,244.1 289.6,238.0 290.6,233.1 291.7,229.0 292.9,225.8 294.4,223.7 296.1,222.4 298.1,220.8 300.6,218.2 303.4,215.3 306.3,213.2 309.4,212.4 312.7,212.3 315.4,212.8 317.0,213.6 318.0,215.1 319.7,217.3 322.8,220.8 326.5,225.1 329.8,229.1 332.1,232.1 334.1,234.7 336.4,238.4 339.3,244.4 342.4,251.4 345.3,257.2 347.6,260.3 349.6,262.2 351.6,264.8 353.7,268.7 355.7,273.3 357.9,278.4 360.4,284.7 362.9,291.5 365.1,296.5 366.8,298.6 368.1,299.0 369.2,299.2 370.2,299.3 371.1,299.2 372.0,300.0 373.0,301.7 374.1,304.3 375.4,308.1 376.9,313.8 378.6,320.7 380.5,327.0 382.8,332.1 385.3,336.6 387.9,340.4 390.5,343.4 393.2,345.8 395.9,347.6 398.7,349.0 401.5,349.8 404.4,349.8 407.6,348.8 410.8,346.9 413.3,344.8 414.5,342.8 415.0,340.5 415.5,337.4 416.1,332.9 416.8,327.5 417.5,321.7 418.2,315.6 419.0,309.0 419.7,302.2 420.1,295.2 420.5,287.8 421.1,280.1 422.1,271.5 423.3,262.5 424.5,254.4 425.6,247.8 426.7,242.1 427.6,237.0 428.3,232.2 428.9,228.0 429.7,224.3 430.6,221.1 431.6,218.4 432.8,216.5 434.1,215.8 435.6,215.9 437.0,215.6 438.2,214.3 439.3,212.7 440.7,211.4 442.3,210.8 444.2,210.5 446.3,210.3 448.6,210.1 451.2,210.0 453.6,210.4 455.8,211.6 457.8,213.2 459.9,214.9 462.3,216.3 464.7,217.7 466.9,219.3 468.4,221.1 469.6,223.1 471.0,225.8 472.9,229.8 475.0,234.5 476.9,238.8 478.7,242.3 480.3,245.4 482.2,248.4 484.4,251.3 486.7,254.2 488.8,257.5 490.6,261.4 492.1,265.6 493.6,269.9 495.0,274.4 496.4,279.0 497.8,283.3 499.1,287.4 500.5,291.3 502.1,294.2 503.9,295.5 505.9,295.7 507.8,296.4 509.4,297.9 510.8,299.8 512.1,302.2 513.2,305.3 514.2,309.0 515.3,312.9 516.6,316.9 518.0,321.3 519.5,325.6 521.2,330.2 523.2,334.8 525.0,338.8 526.7,342.0 528.4,344.6 530.0,346.7 531.8,348.4 533.5,349.8 535.3,350.8 537.0,351.6 538.7,352.0 540.3,352.1 541.9,351.4 543.5,350.3 545.1,349.2 547.0,348.4 548.8,347.6 550.3,346.4 551.1,344.6 551.6,342.3 552.0,339.3 552.5,335.5 553.0,331.0 553.5,325.8 554.1,319.6 554.8,312.8 555.5,306.1 556.1,299.7 556.7,293.4 557.3,287.6 558.0,282.9 558.7,278.7 559.5,273.6 560.6,266.8 561.8,259.2 562.9,251.7 563.8,244.7 564.7,237.9 565.5,231.9 566.2,226.8 566.8,222.6 567.7,218.9 568.7,216.1 569.8,213.9 571.1,212.2 572.5,211.2 574.1,210.8 575.9,210.2 578.2,209.1 580.8,207.9 583.4,207.1 585.8,206.4 588.3,206.1 590.7,206.5 592.9,207.8 595.1,209.7 597.2,211.9 599.4,214.1 601.5,216.5 603.7,219.1 605.8,222.0 608.0,225.2 610.0,228.4 611.8,231.7 613.6,235.0 615.3,238.8 617.2,243.3 619.0,248.3 620.9,252.4 622.7,255.0 624.4,256.7 626.1,258.8 627.6,261.8 629.1,265.3 630.4,268.9 631.4,272.9 632.3,277.1 633.3,281.1 634.7,285.1 636.2,288.9 637.6,291.8 638.8,293.4 639.8,294.1 641.0,294.6 642.5,294.6 644.1,294.5 645.7,295.3 647.0,297.4 648.3,300.3 649.6,304.3 651.2,309.6 652.9,315.9 654.7,321.8 656.4,326.8 658.2,331.4 660.0,336.1 662.0,341.5 664.1,347.0 666.0,351.3 667.7,353.7 669.3,354.9 670.8,355.8 672.1,356.6 673.3,357.0 674.7,356.9 676.4,356.2 678.2,355.0 680.1,353.4 682.2,351.6 684.4,349.6 686.2,346.8 687.4,343.1 688.2,338.8 688.9,334.2 689.5,329.5 689.9,324.7 690.4,319.6 691.1,314.8 691.8,309.9 692.6,303.8 693.5,295.9 694.4,286.8 695.4,278.3 696.4,271.3 697.4,264.9 698.4,258.3 699.6,250.9 700.8,243.3 702.0,235.7 703.1,228.1 704.0,220.7 705.0,213.9 705.9,207.9 706.7,202.5 707.4,198.7 708.0,197.2 708.5,197.1 709.2,197.5 710.3,198.1 711.6,199.2 712.9,199.8 714.1,199.7 715.2,199.3 716.3,198.5 717.1,197.3 717.8,195.8 718.9,194.4 720.7,193.3 722.8,192.3 724.7,191.7 726.2,191.6 727.5,191.8 728.8,192.3 730.2,192.9 731.5,193.8 732.9,195.2 734.0,197.3 735.2,199.8 736.8,202.5 739.3,204.9 742.3,207.4 745.1,210.3 747.3,213.8 749.4,217.6 751.2,221.3 752.5,224.7 753.6,227.9 754.8,231.1 756.0,234.0 757.2,236.9 758.7,239.7 761.1,242.5 763.7,245.3 765.9,248.5 767.1,252.5 767.9,256.8 768.7,261.1 769.9,265.2 771.2,269.1 772.6,272.6 774.1,275.8 775.7,278.6 777.2,280.8 778.5,282.2 779.8,282.9 781.0,283.6 782.3,283.9 783.6,284.1 784.8,284.8 785.8,286.1 786.8,287.9 787.8,290.8 789.1,295.4 790.5,301.1 791.9,306.4 793.1,310.6 794.3,314.5 795.5,318.4 796.8,322.6 798.1,326.8 799.6,330.7 801.4,334.3 803.2,337.5 805.2,340.4 807.2,342.9 809.4,345.1 811.2,346.6 812.5,347.2 813.5,347.1 814.7,346.5 816.4,345.5 818.4,344.0 820.3,342.5 822.2,341.1 824.2,339.6 825.6,337.8 826.2,335.7 826.4,333.3 826.6,330.0 827.2,325.4 828.0,319.9 828.7,314.3 829.3,308.9 829.8,303.4 830.4,297.7 831.4,291.7 832.5,285.6 833.5,279.0 834.2,272.0 834.7,264.7 835.5,257.3 836.6,249.8 837.8,242.1 839.0,235.0 840.0,229.0 841.0,223.5 842.0,217.3 843.0,209.1 844.0,200.3 844.8,192.8 845.3,187.7 845.7,184.1 846.3,181.1 847.3,178.7 848.6,177.1 849.8,176.4 850.6,177.0 851.2,178.4 852.0,179.6 853.1,179.9 854.4,180.0 855.8,179.7 857.2,178.7 858.6,177.4 860.1,176.4 861.6,175.9 863.2,175.6 864.7,175.5 866.0,175.5 867.3,175.6 868.9,176.3 871.0,178.0 873.4,180.3 875.7,182.4 877.9,183.8 879.9,185.0 881.8,186.4 883.3,188.3 884.6,190.5 886.1,193.2 887.7,196.7 889.5,200.7 891.3,205.0 893.0,209.8 894.8,214.8 896.4,219.0 897.9,221.7 899.4,223.6 900.7,225.2 901.9,226.4 903.0,227.4 904.0,228.8 905.0,231.0 905.9,233.7 906.9,237.0 908.1,241.3 909.3,246.3 910.6,250.7 911.9,254.1 913.3,257.0 914.8,259.4 916.6,261.0 918.6,262.0 920.4,262.8 921.8,263.1 923.1,263.0 924.4,263.5 925.5,264.6 926.5,266.2 927.6,268.8 929.0,272.8 930.6,277.7 932.0,282.7 933.2,287.6 934.4,292.6 935.7,298.0 937.4,304.3 939.3,310.9 941.4,316.8 943.8,321.5 946.3,325.6 948.4,328.7 949.9,330.9 951.0,332.2 952.2,333.2 953.6,334.2 955.0,334.9 956.7,335.1 958.9,334.5 961.3,333.4 963.2,331.9 964.3,330.3 965.0,328.3 965.6,325.4 966.3,321.1 966.9,315.8 967.5,310.2 968.1,304.2 968.7,297.9 969.4,292.1 970.0,287.9 970.6,284.3 971.5,279.0 972.7,270.8 974.2,261.0 975.5,251.3 976.7,242.3 977.8,233.5 978.8,225.0 979.9,216.7 980.8,208.7 981.8,200.9 982.9,193.0 984.0,185.3 984.9,178.8 985.5,174.2 986.0,170.9 986.7,168.1 987.7,165.4 988.8,163.2 989.9,162.1 990.9,162.8 991.8,164.5 992.7,166.0 993.7,166.7 994.7,167.2 995.8,167.3 997.1,167.0 998.5,166.4 1000.0,165.9 1001.4,165.7 1002.8,165.6 1004.3,165.7 1005.8,165.7 1007.5,165.8 1008.9,166.1 1010.0,166.8 1010.9,167.8 1012.0,169.3 1013.6,171.6 1015.5,174.5 1017.3,177.3 1019.1,179.7 1020.9,182.1 1022.7,184.9 1024.8,188.3 1027.0,192.0 1028.8,196.0 1030.0,200.2 1030.9,204.5 1031.8,208.7 1033.1,212.7 1034.5,216.4 1036.0,219.6 1037.7,222.0 1039.4,223.9 1041.1,226.2 1042.6,229.5 1043.9,233.3 1045.4,237.1 1046.9,241.0 1048.5,244.9 1050.0,248.7 1051.2,252.4 1052.3,256.0 1053.6,259.2 1055.4,261.8 1057.3,263.9 1059.2,265.4 1060.9,265.9 1062.5,265.7 1064.0,265.9 1065.4,266.6 1066.8,267.6 1068.1,269.3 1069.1,272.0 1069.9,275.5 1070.8,279.6 1072.0,284.7 1073.3,290.5 1074.5,296.2 1075.5,301.1 1076.3,306.0 1077.0,311.6 1077.4,319.1 1077.7,327.4 1077.7,333.9 1077.4,336.9 1076.8,338.2 1076.0,339.7 1074.8,342.1 1073.4,344.8 1071.9,347.9 1070.5,351.6 1069.2,355.7 1067.9,360.0 1066.8,364.4 1065.8,369.1 1064.8,373.9 1063.7,378.6 1062.5,383.4 1061.4,388.0 1060.5,391.8 1059.7,395.4 1058.9,399.9 1058.0,406.3 1057.2,413.5 1056.4,419.9 1055.8,424.6 1055.2,428.4 1054.7,431.9 1054.3,434.6 1054.0,437.0 1053.5,441.0 1052.8,448.0 1052.0,456.6 1051.1,464.8 1050.2,471.9 1049.2,478.5 1048.3,485.2 1047.5,492.4 1046.8,499.6 1046.1,506.1 1045.5,511.2 1044.8,515.6 1044.0,520.4 1043.0,526.3 1041.9,532.6 1040.9,538.1 1039.8,542.2 1038.8,545.6 1037.8,548.6 1036.7,551.6 1035.7,554.2 1034.7,556.0 1033.7,556.7 1032.8,556.7 1032.1,556.6 1032.1,556.8 1032.4,556.9 1032.2,556.4 1030.9,555.0 1029.1,552.9 1027.4,550.2 1026.1,546.8 1025.0,542.8 1023.8,539.0 1022.6,535.7 1021.4,532.6 1020.1,529.7 1018.7,526.9 1017.3,524.3 1015.5,522.1 1013.1,520.9 1010.5,520.2 1008.0,518.8 1005.9,516.3 1004.0,513.2 1002.5,509.9 1001.4,506.5 1000.7,502.9 999.8,499.6 998.5,497.0 997.0,494.6 995.6,492.2 994.4,489.5 993.3,486.7 991.9,484.2 989.7,482.2 987.2,480.5 985.0,478.3 983.6,475.1 982.6,471.5 981.4,467.9 979.8,464.7 978.1,461.7 976.2,458.1 974.0,453.5 971.6,448.5 969.5,443.9 967.8,440.0 966.3,436.6 964.5,433.6 962.1,431.4 959.3,429.6 956.5,427.8 953.8,425.7 951.1,423.6 948.6,421.9 946.4,420.9 944.4,420.4 942.6,420.3 941.2,420.3 940.0,420.7 939.0,422.7 938.2,426.8 937.5,432.5 936.8,439.0 936.0,446.5 935.1,454.8 934.3,463.0 933.4,470.7 932.6,478.4 931.8,486.7 930.9,496.2 930.1,506.3 929.4,515.0 928.9,521.3 928.6,526.1 928.0,530.6 927.2,535.1 926.1,539.1 924.7,542.6 922.8,545.4 920.5,547.5 918.3,549.4 916.2,551.5 914.1,553.3 912.2,554.5 910.6,555.1 909.3,555.0 907.9,554.5 906.4,553.5 904.8,552.0 903.1,550.1 901.1,547.8 899.0,545.0 896.8,541.7 894.8,537.5 892.7,532.8 890.8,528.5 889.1,524.7 887.5,521.4 885.8,518.4 883.9,515.8 881.9,513.6 880.1,512.1 878.8,511.6 877.7,511.7 876.4,511.5 874.6,510.6 872.7,509.3 870.8,507.4 869.1,504.6 867.4,501.2 865.6,497.3 863.7,492.7 861.6,487.7 859.7,483.1 858.4,479.1 857.3,475.5 855.8,472.2 853.6,469.9 851.0,467.9 848.7,465.2 846.8,461.2 845.2,456.4 843.7,451.8 842.3,447.6 841.0,443.6 839.3,439.6 836.7,435.3 833.7,431.1 830.9,427.4 828.6,424.9 826.6,422.9 824.6,420.7 822.7,417.9 821.0,414.9 819.2,412.4 817.5,410.4 815.8,408.8 814.2,407.7 812.5,407.1 810.9,407.0 809.4,407.3 807.9,407.9 806.5,408.9 805.4,410.7 804.7,413.4 804.3,416.9 803.8,421.2 803.0,426.4 802.1,432.5 801.3,439.2 800.6,446.7 800.0,454.8 799.2,462.9 798.4,471.0 797.5,479.1 796.7,486.9 795.7,494.6 794.7,502.1 793.8,508.9 793.2,515.0 792.7,520.5 792.2,525.2 791.6,529.1 791.1,532.3 790.4,534.8 789.6,536.0 788.6,536.5 787.3,537.7 785.5,540.6 783.4,544.1 781.2,546.9 779.0,548.4 776.7,549.1 774.7,549.3 773.2,549.1 771.8,548.3 770.3,547.2 768.3,545.8 766.2,544.1 764.1,541.9 762.2,538.9 760.5,535.4 758.8,531.8 757.2,528.2 755.5,524.5 754.0,520.9 752.5,517.5 751.1,514.3 749.7,511.3 748.3,508.5 746.9,506.0 745.3,504.0 743.2,503.1 740.9,502.6 738.9,501.5 737.3,499.1 736.0,496.0 734.3,492.3 732.1,487.7 729.6,482.4 727.3,477.4 725.4,472.7 723.7,468.2 721.9,464.4 719.8,462.1 717.6,460.4 715.4,457.3 713.1,451.7 710.7,444.8 708.3,438.3 706.1,432.8 703.9,427.8 701.8,423.3 700.0,419.5 698.2,416.2 696.4,413.3 694.1,410.8 691.8,408.6 689.3,406.4 686.8,403.7 684.3,400.9 681.8,398.7 679.4,397.2 677.1,396.2 675.0,395.5 673.4,395.0 672.0,394.7 670.9,394.9 670.2,395.3 669.9,396.1 669.5,398.3 669.0,402.4 668.5,408.0 668.0,414.2 667.4,420.9 666.7,428.3 665.9,435.7 665.1,443.0 664.3,450.5 663.5,457.8 662.7,464.8 662.0,471.6 661.4,478.4 660.9,485.3 660.5,492.2 660.0,498.3 659.3,503.4 658.5,507.7 657.7,511.7 657.0,515.6 656.4,519.2 655.5,522.1 654.4,524.2 653.0,525.7 651.3,527.3 649.3,529.5 647.0,531.9 644.8,533.9 642.7,535.2 640.6,536.2 638.8,536.4 637.3,535.8 636.2,534.5 634.8,533.0 633.3,531.6 631.6,529.9 629.7,527.8 627.2,525.0 624.4,521.7 621.9,518.4 620.0,515.0 618.3,511.5 616.8,508.1 615.4,504.6 614.1,501.1 612.8,498.2 611.5,496.0 610.3,494.3 609.1,493.1 607.8,492.8 606.6,492.9 605.3,492.8 603.9,492.2 602.3,491.3 600.7,489.4 599.1,485.9 597.4,481.5 595.7,477.4 594.1,473.7 592.5,470.4 591.0,467.4 589.7,465.1 588.4,463.1 586.9,461.3 585.0,460.0 582.9,458.8 581.0,456.7 579.3,453.3 577.7,449.0 576.0,444.7 574.0,440.4 572.0,436.1 570.0,432.2 567.9,429.2 565.7,426.7 563.7,423.8 562.1,420.0 560.7,416.0 559.0,412.4 556.8,409.7 554.4,407.6 552.0,405.8 549.9,404.3 547.8,403.2 545.9,402.0 544.1,400.6 542.4,399.1 540.9,398.1 539.5,397.7 538.3,397.8 537.0,398.1 535.7,398.1 534.4,398.4 533.2,400.0 532.5,403.5 531.9,408.4 531.2,414.2 530.5,421.1 529.7,428.9 529.0,436.4 528.4,443.1 527.9,449.6 527.3,456.3 526.7,463.5 526.1,471.0 525.4,478.2 524.7,485.0 524.1,491.5 523.5,497.7 523.0,503.6 522.6,509.3 522.1,514.3 521.6,518.4 521.1,521.9 520.3,524.8 518.9,526.9 517.2,528.4 515.4,530.1 513.3,532.5 511.1,535.0 508.9,537.2 507.0,539.1 505.2,540.6 503.2,541.1 500.9,539.9 498.5,537.8 496.2,535.7 494.1,534.5 492.2,533.4 490.4,531.6 488.7,528.7 487.0,525.1 485.3,521.5 483.2,518.4 481.0,515.3 479.3,512.3 478.6,509.5 478.3,506.7 477.7,504.2 476.1,501.6 474.1,499.1 472.3,497.3 470.8,496.7 469.5,496.7 468.1,496.1 466.6,494.4 465.0,492.0 463.4,489.2 462.0,485.6 460.5,481.6 459.3,478.0 458.3,475.5 457.4,473.4 456.3,471.3 455.2,468.7 453.8,466.1 452.2,463.7 450.0,461.8 447.5,460.0 445.1,457.7 443.0,454.6 441.0,450.9 439.2,447.1 437.5,443.2 436.0,439.1 434.4,435.0 432.8,431.1 431.1,427.1 429.4,423.3 427.7,419.4 426.0,415.6 424.1,412.2 421.9,409.4 419.6,406.9 417.3,404.9 414.8,403.2 412.3,402.0 410.0,400.6 408.0,398.9 406.3,397.1 404.7,395.7 403.5,394.8 402.4,394.4 401.2,394.4 399.8,394.8 398.2,395.7 396.8,397.3 395.8,399.5 395.1,402.4 394.4,406.3 393.7,411.4 393.2,417.4 392.6,423.9 392.0,430.7 391.3,438.0 390.7,446.2 389.9,455.8 389.2,466.2 388.5,475.9 388.1,484.2 387.9,491.7 387.5,498.2 386.7,503.5 385.9,507.8 385.1,511.7 384.6,515.5 384.2,518.9 383.3,521.7 381.9,523.3 380.0,524.2 378.1,525.4 376.2,527.3 374.4,529.5 372.4,531.4 370.2,533.1 368.0,534.5 365.8,535.2 363.8,534.8 361.8,533.7 359.9,532.2 357.9,530.5 355.9,528.5 353.9,525.9 351.7,522.5 349.3,518.5 347.1,514.5 345.0,510.4 343.0,506.4 341.1,502.6 339.7,499.0 338.4,495.8 337.1,493.5 335.5,492.9 333.7,493.2 332.0,492.5 330.4,489.8 328.9,486.2 327.3,482.3 325.5,478.2 323.6,474.0 321.9,469.8 320.6,465.7 319.6,461.7 318.3,458.2 316.3,455.5 314.1,453.4 312.0,451.5 310.3,450.0 308.9,448.8 307.2,446.3 305.0,441.4 302.7,435.3 300.5,429.7 298.7,425.3 297.0,421.5 295.0,417.6 292.4,413.4 289.4,409.2 286.6,405.2 284.3,401.6 282.2,398.2 279.8,394.9 276.6,391.5 273.1,388.3 270.0,385.6 267.5,383.5 265.5,381.9 263.8,381.0 262.7,380.9 262.1,381.4 261.3,382.2 260.1,383.0 258.7,384.2 257.7,387.0 257.0,391.9 256.5,398.5 256.0,405.6 255.7,413.2 255.3,421.4 254.9,429.9 254.2,438.7 253.3,447.7 252.5,456.1 251.8,463.3 251.3,469.9 250.7,476.0 250.2,481.7 249.6,487.0 248.9,492.0 248.1,497.0 247.2,501.6 245.9,505.7 244.2,508.7 242.1,511.1 240.0,513.4 238.1,515.9 236.1,518.3 234.0,520.4 231.9,521.9 229.7,523.1 227.6,523.7 225.6,523.8 223.6,523.3 221.7,522.6 220.3,521.7 218.9,520.6 217.3,518.6 214.9,515.2 212.3,511.0 209.8,506.7 207.7,502.4 205.8,498.0 204.1,494.1 202.6,490.9 201.3,488.2 199.8,486.3 198.1,485.8 196.3,486.0 194.4,485.2 192.3,482.7 190.0,479.1 187.8,475.3 185.9,471.2 184.1,466.9 182.3,462.8 180.6,458.9 178.9,455.3 177.1,452.6 175.0,451.5 172.9,451.3 170.9,450.7 169.4,449.3 168.1,447.5 166.6,444.8 164.9,441.0 163.1,436.3 161.3,431.8 159.6,427.8 157.9,424.0 156.2,420.6 154.3,417.9 152.4,415.7 150.4,413.3 148.3,410.2 146.1,406.9 143.8,404.2 141.5,402.5 139.1,401.5 136.7,400.7 134.4,400.3 132.0,400.1 129.7,400.3 127.3,400.8 124.9,401.7 122.9,402.8 121.4,404.2 120.2,405.9 119.2,407.6 118.3,409.2 117.6,410.8 116.9,413.6 116.1,418.3 115.2,424.1 114.5,429.9 113.8,435.4 113.2,440.9 112.6,446.1 112.0,451.2 111.5,456.1 111.0,460.2 110.7,463.2 110.5,465.4 109.7,467.1 107.9,468.3 105.6,469.0 103.9,469.5" fill="none" stroke="#40c8a8" stroke-width="1"/>
<polyline points="99.4,498.4 100.1,495.3 101.1,490.9 102.0,486.0 102.7,480.7 103.4,475.0 104.0,470.0 104.7,467.0 105.3,464.6 106.0,460.0 106.6,451.5 107.3,440.7 108.0,430.0 108.9,419.6 110.0,409.3 111.0,400.0 111.9,392.7 112.8,386.5 113.6,380.0 114.1,372.7 114.5,365.1 115.0,357.0 115.8,348.3 116.9,339.1 118.0,330.0 119.3,321.1 120.7,312.3 122.0,304.0 123.3,296.0 124.5,288.4 125.6,282.0 126.5,277.1 127.3,273.5 128.0,271.0 128.6,269.7 129.1,269.6 130.0,270.0 131.5,271.2 133.3,273.0 135.0,274.4 136.4,275.1 137.7,275.3 139.0,275.0 140.4,274.3 141.7,273.0 143.0,271.0 144.0,268.3 145.0,264.7 146.0,260.0 147.3,253.4 148.6,245.6 150.0,238.0 151.4,230.9 152.7,223.9 154.0,218.0 155.0,213.4 155.9,209.8 157.0,207.0 158.4,205.3 160.0,204.5 162.0,203.6 164.6,202.1 167.6,200.6 170.0,199.6 171.2,199.1 171.9,199.1 173.0,200.0 175.1,202.4 177.6,205.7 180.0,209.0 182.1,212.1 184.1,215.1 186.0,218.0 187.8,220.4 189.4,222.5 191.0,225.0 192.4,228.1 193.7,231.6 195.0,235.0 196.4,237.9 197.8,240.6 199.5,244.0 201.5,248.8 203.8,254.3 206.0,259.0 208.0,262.0 210.0,264.3 212.0,267.0 214.0,270.6 216.0,274.6 218.0,279.0 220.1,284.4 222.2,290.2 224.3,295.0 226.3,298.2 228.2,300.4 230.0,302.0 231.8,302.8 233.5,303.1 235.0,304.0 236.1,305.9 237.0,308.4 238.0,312.0 239.2,317.4 240.5,323.9 242.0,330.0 243.9,335.6 245.9,340.8 248.0,345.0 249.9,347.7 251.9,349.5 254.0,351.0 256.6,352.7 259.4,354.3 262.0,355.0 264.1,354.6 266.0,353.5 268.0,352.0 270.4,350.3 273.0,348.3 275.0,346.0 276.0,343.9 276.5,341.5 277.0,338.0 277.7,332.7 278.3,326.4 279.0,320.0 279.6,314.2 280.3,308.4 281.0,302.0 281.9,294.3 283.0,285.9 284.0,278.0 285.0,271.0 286.0,264.5 287.0,258.0 288.0,251.0 289.0,244.1 290.0,238.0 290.9,233.2 291.9,229.3 293.0,226.0 294.4,223.6 296.0,221.9 298.0,220.0 300.4,217.5 303.1,214.9 306.0,213.0 309.1,212.0 312.3,211.7 315.0,212.0 316.8,213.0 318.1,214.6 320.0,217.0 323.1,220.6 326.8,225.0 330.0,229.0 332.2,231.9 333.9,234.4 336.0,238.0 338.9,244.0 342.0,251.2 345.0,257.0 347.5,260.0 349.8,261.6 352.0,264.0 354.0,268.0 356.0,272.8 358.0,278.0 360.4,284.3 362.9,291.0 365.0,296.0 366.6,298.2 367.9,298.7 369.0,299.0 370.0,299.1 371.0,298.8 372.0,299.5 373.2,301.4 374.6,304.1 376.0,308.0 377.5,313.8 379.1,320.7 381.0,327.0 383.1,332.0 385.5,336.3 388.0,340.0 390.6,343.0 393.3,345.3 396.0,347.0 398.6,348.3 401.3,349.0 404.0,349.0 407.1,347.9 410.4,346.1 413.0,344.0 414.5,342.1 415.3,340.0 416.0,337.0 416.7,332.8 417.4,327.7 418.0,322.0 418.7,315.8 419.4,309.0 420.0,302.0 420.5,295.0 420.9,287.7 421.6,280.0 422.6,271.3 423.8,262.1 425.0,254.0 426.1,247.5 427.1,242.0 428.0,237.0 428.7,232.2 429.3,227.8 430.0,224.0 430.7,220.7 431.4,218.0 432.4,216.0 433.8,215.3 435.4,215.3 437.0,215.0 438.3,213.8 439.6,212.3 441.0,211.0 442.5,210.3 444.1,209.9 446.0,209.6 448.5,209.3 451.4,209.2 454.0,209.6 456.1,210.7 458.0,212.3 460.0,214.0 462.4,215.6 464.9,217.2 467.0,219.0 468.5,220.7 469.6,222.4 471.0,225.0 472.9,228.9 475.0,233.6 477.0,238.0 478.7,241.6 480.2,244.9 482.0,248.0 484.3,250.9 486.7,253.7 489.0,257.0 490.9,261.0 492.5,265.5 494.0,270.0 495.4,274.4 496.7,278.8 498.0,283.0 499.3,287.1 500.5,291.1 502.0,294.0 503.9,295.2 506.1,295.4 508.0,296.0 509.5,297.5 510.7,299.5 512.0,302.0 513.3,305.2 514.7,309.0 516.0,313.0 517.3,317.2 518.6,321.7 520.0,326.0 521.6,330.2 523.3,334.3 525.0,338.0 526.7,341.1 528.3,343.8 530.0,346.0 531.7,347.7 533.3,349.0 535.0,350.0 536.7,350.9 538.3,351.5 540.0,351.6 541.7,351.1 543.3,350.1 545.0,349.0 546.8,348.2 548.5,347.3 550.0,346.0 551.0,344.2 551.8,341.9 552.4,339.0 553.0,335.4 553.5,331.1 554.0,326.0 554.5,319.8 555.0,312.8 555.6,306.0 556.4,299.7 557.2,293.6 558.0,288.0 558.7,283.3 559.3,279.1 560.0,274.0 560.9,267.2 562.0,259.5 563.0,252.0 564.0,244.9 565.1,238.1 566.0,232.0 566.7,226.9 567.3,222.7 568.0,219.0 568.9,215.9 569.8,213.4 571.0,211.6 572.4,210.7 574.1,210.5 576.0,210.0 578.1,208.8 580.5,207.4 583.0,206.4 585.7,205.8 588.4,205.6 591.0,206.0 593.1,207.2 595.0,208.9 597.0,211.0 599.3,213.4 601.7,216.1 604.0,219.0 606.1,221.9 608.1,224.9 610.0,228.0 611.7,231.1 613.3,234.3 615.0,238.0 617.0,242.7 619.0,247.8 621.0,252.0 622.7,254.4 624.4,255.9 626.0,258.0 627.7,261.3 629.5,265.1 631.0,269.0 632.1,273.0 633.0,277.1 634.0,281.0 635.3,284.7 636.7,288.3 638.0,291.0 639.0,292.6 639.9,293.4 641.0,294.0 642.6,294.2 644.3,294.1 646.0,295.0 647.4,297.1 648.6,300.0 650.0,304.0 651.6,309.5 653.3,316.0 655.0,322.0 656.6,326.9 658.3,331.4 660.0,336.0 662.0,341.3 664.0,346.8 666.0,351.0 667.8,353.2 669.4,354.3 671.0,355.0 672.4,355.8 673.6,356.4 675.0,356.4 676.6,355.8 678.2,354.6 680.0,353.0 682.0,351.1 684.2,348.8 686.0,346.0 687.3,342.4 688.2,338.3 689.0,334.0 689.7,329.6 690.4,324.9 691.0,320.0 691.6,315.2 692.3,310.1 693.0,304.0 693.9,295.9 695.0,286.6 696.0,278.0 697.0,271.0 698.0,264.6 699.0,258.0 700.0,250.8 701.0,243.4 702.0,236.0 703.0,228.4 704.0,220.8 705.0,214.0 706.1,208.0 707.1,202.8 708.0,199.0 708.6,197.2 709.0,196.9 709.6,197.0 710.6,197.5 711.8,198.4 713.0,199.0 714.0,199.1 715.0,199.0 716.0,198.4 716.9,197.1 717.8,195.5 719.0,194.0 720.9,192.9 723.0,192.0 725.0,191.4 726.5,191.1 727.7,191.2 729.0,191.6 730.3,192.4 731.7,193.5 733.0,195.0 734.2,197.0 735.4,199.5 737.0,202.0 739.4,204.5 742.3,207.1 745.0,210.0 747.2,213.5 749.2,217.3 751.0,221.0 752.5,224.5 753.7,227.9 755.0,231.0 756.2,233.8 757.4,236.3 759.0,239.0 761.3,241.8 763.9,244.7 766.0,248.0 767.3,252.1 768.1,256.6 769.0,261.0 770.3,265.3 771.6,269.4 773.0,273.0 774.3,275.9 775.7,278.1 777.0,280.0 778.3,281.4 779.7,282.3 781.0,283.0 782.4,283.3 783.7,283.3 785.0,284.0 786.0,285.6 787.0,287.9 788.0,291.0 789.3,295.5 790.6,300.9 792.0,306.0 793.3,310.2 794.7,314.0 796.0,318.0 797.3,322.4 798.6,326.9 800.0,331.0 801.6,334.4 803.2,337.4 805.0,340.0 807.0,342.4 809.1,344.6 811.0,346.0 812.4,346.6 813.7,346.5 815.0,346.0 816.6,345.0 818.3,343.6 820.0,342.0 822.0,340.5 824.0,338.9 825.6,337.0 826.4,335.1 826.6,333.1 827.0,330.0 827.6,325.3 828.3,319.7 829.0,314.0 829.6,308.8 830.3,303.6 831.0,298.0 831.8,292.0 832.7,285.7 833.6,279.0 834.4,271.9 835.2,264.4 836.0,257.0 837.0,249.5 838.0,242.0 839.0,235.0 840.0,228.9 841.0,223.3 842.0,217.0 843.0,209.0 844.1,200.3 845.0,193.0 845.7,187.9 846.3,184.0 847.0,181.0 847.8,178.5 848.7,176.8 849.6,176.0 850.4,176.5 851.1,177.9 852.0,179.0 853.2,179.3 854.6,179.3 856.0,179.0 857.3,178.1 858.6,177.0 860.0,176.0 861.6,175.5 863.4,175.1 865.0,175.0 866.3,174.9 867.5,174.9 869.0,175.6 871.1,177.4 873.6,179.8 876.0,182.0 878.1,183.4 880.2,184.5 882.0,186.0 883.4,187.9 884.6,190.2 886.0,193.0 887.9,196.6 890.0,200.7 892.0,205.0 893.8,209.8 895.4,214.9 897.0,219.0 898.4,221.7 899.8,223.5 901.0,225.0 902.1,226.0 903.0,226.7 904.0,228.0 905.0,230.4 905.9,233.4 907.0,237.0 908.3,241.5 909.6,246.6 911.0,251.0 912.3,254.3 913.6,256.9 915.0,259.0 916.6,260.6 918.4,261.8 920.0,262.6 921.4,262.8 922.7,262.6 924.0,263.0 925.3,264.3 926.7,266.2 928.0,269.0 929.3,273.0 930.7,278.0 932.0,283.0 933.3,287.8 934.5,292.7 936.0,298.0 937.9,304.3 939.9,311.1 942.0,317.0 944.1,321.5 946.1,325.1 948.0,328.0 949.4,330.0 950.7,331.4 952.0,332.4 953.6,333.4 955.2,334.2 957.0,334.4 959.0,334.0 961.2,333.0 963.0,331.6 964.3,330.0 965.2,328.0 966.0,325.0 966.7,320.7 967.4,315.5 968.0,310.0 968.7,304.0 969.3,297.7 970.0,292.0 970.6,287.9 971.2,284.3 972.0,279.0 973.2,270.7 974.7,260.7 976.0,251.0 977.1,242.1 978.0,233.4 979.0,225.0 980.0,216.8 981.0,208.8 982.0,201.0 983.0,193.1 984.1,185.4 985.0,179.0 985.7,174.3 986.3,170.9 987.0,168.0 987.9,165.3 989.0,163.1 990.0,162.0 991.0,162.5 992.0,164.1 993.0,165.4 994.0,166.1 994.9,166.5 996.0,166.6 997.3,166.2 998.6,165.5 1000.0,165.0 1001.3,164.8 1002.6,164.9 1004.0,165.0 1005.7,165.2 1007.4,165.5 1009.0,166.0 1010.1,166.5 1010.9,167.2 1012.0,168.6 1013.5,171.0 1015.2,174.1 1017.0,177.0 1018.9,179.3 1021.0,181.3 1023.0,184.0 1025.1,187.6 1027.2,191.7 1029.0,196.0 1030.2,200.4 1031.0,204.9 1032.0,209.0 1033.2,212.7 1034.6,216.0 1036.0,219.0 1037.6,221.4 1039.3,223.5 1041.0,226.0 1042.7,229.3 1044.4,233.1 1046.0,237.0 1047.4,241.0 1048.7,245.1 1050.0,249.0 1051.3,252.6 1052.6,256.0 1054.0,259.0 1055.6,261.5 1057.3,263.6 1059.0,265.0 1060.7,265.3 1062.4,264.9 1064.0,265.0 1065.4,265.8 1066.8,267.0 1068.0,269.0 1069.0,272.0 1070.0,275.7 1071.0,280.0 1072.3,285.0 1073.7,290.5 1075.0,296.0 1076.1,301.1 1076.9,306.2 1077.6,312.0 1078.0,319.5 1078.1,327.6 1078.0,334.0 1077.6,337.1 1076.9,338.4 1076.0,340.0 1074.8,342.4 1073.4,345.0 1072.0,348.0 1070.6,351.6 1069.3,355.7 1068.0,360.0 1066.9,364.5 1066.0,369.3 1065.0,374.0 1064.0,378.7 1063.0,383.5 1062.0,388.0 1061.0,391.9 1059.9,395.5 1059.0,400.0 1058.2,406.4 1057.6,413.6 1057.0,420.0 1056.4,424.7 1055.9,428.5 1055.4,432.0 1054.9,434.7 1054.4,437.0 1053.8,441.0 1053.1,448.0 1052.2,456.7 1051.4,465.0 1050.6,472.1 1049.8,478.9 1049.0,485.6 1048.2,492.7 1047.4,499.9 1046.6,506.3 1045.9,511.4 1045.1,515.8 1044.3,520.6 1043.3,526.4 1042.1,532.6 1041.0,538.0 1040.0,542.1 1039.0,545.4 1038.0,548.4 1036.9,551.3 1035.7,553.8 1034.7,555.6 1033.7,556.4 1032.9,556.4 1032.3,556.4 1032.2,556.7 1032.5,557.0 1032.3,556.4 1031.5,554.6 1030.3,552.0 1029.0,549.0 1027.7,545.5 1026.4,541.7 1025.0,538.0 1023.7,534.7 1022.4,531.5 1021.0,528.6 1019.5,525.8 1017.9,523.2 1016.0,521.0 1013.7,519.5 1011.3,518.5 1009.0,517.0 1007.1,514.7 1005.4,512.0 1004.0,509.0 1002.9,505.7 1002.1,502.3 1001.0,499.0 999.4,496.2 997.6,493.6 996.0,491.0 995.0,488.3 994.2,485.5 993.0,483.0 990.9,481.0 988.3,479.2 986.0,477.0 984.5,474.0 983.3,470.5 982.0,467.0 980.5,463.8 978.9,460.6 977.0,457.0 974.7,452.5 972.3,447.5 970.0,443.0 968.3,439.2 966.8,435.9 965.0,433.0 962.6,430.7 959.8,428.9 957.0,427.0 954.3,424.8 951.5,422.7 949.0,421.0 946.8,419.9 944.7,419.4 943.0,419.4 941.6,419.8 940.6,420.7 939.6,423.0 938.7,427.1 937.8,432.6 937.0,439.0 936.1,446.4 935.3,454.7 934.4,463.0 933.6,470.9 932.8,478.7 932.0,487.0 931.2,496.5 930.3,506.4 929.6,515.0 929.1,521.4 928.6,526.5 928.0,531.0 927.3,535.2 926.3,538.8 925.0,542.0 922.9,544.7 920.4,547.0 918.0,549.0 915.9,551.0 913.8,552.8 912.0,554.0 910.6,554.5 909.3,554.5 908.0,554.0 906.4,553.1 904.8,551.9 903.0,550.0 901.1,547.5 899.0,544.5 897.0,541.0 895.0,536.9 892.9,532.3 891.0,528.0 889.3,524.3 887.7,521.0 886.0,518.0 884.0,515.3 881.9,513.0 880.0,511.4 878.6,510.9 877.3,511.2 876.0,511.0 874.4,510.2 872.7,508.9 871.0,507.0 869.4,504.3 867.7,500.9 866.0,497.0 864.0,492.5 861.9,487.6 860.0,483.0 858.6,479.0 857.5,475.3 856.0,472.0 853.8,469.6 851.3,467.6 849.0,465.0 847.2,461.1 845.6,456.6 844.0,452.0 842.4,447.6 840.9,443.3 839.0,439.0 836.5,434.7 833.6,430.6 831.0,427.0 828.9,424.3 826.9,422.2 825.0,420.0 823.0,417.3 820.9,414.5 819.0,412.0 817.2,410.1 815.6,408.5 814.0,407.4 812.5,406.8 811.0,406.7 809.6,407.0 808.3,407.7 807.1,408.7 806.0,410.6 805.2,413.3 804.6,416.7 804.0,421.0 803.3,426.2 802.7,432.3 802.0,439.0 801.2,446.6 800.4,454.8 799.6,463.0 798.7,471.1 797.9,479.1 797.0,487.0 796.1,494.7 795.2,502.2 794.4,509.0 793.7,515.0 793.0,520.3 792.4,525.0 791.8,529.1 791.2,532.5 790.4,535.0 789.5,536.0 788.4,536.1 787.0,537.0 785.2,539.7 783.1,543.2 781.0,546.0 779.0,547.5 776.9,548.3 775.0,548.6 773.3,548.5 771.7,548.0 770.0,547.0 768.0,545.5 766.0,543.5 764.0,541.0 762.3,538.0 760.6,534.5 759.0,531.0 757.3,527.7 755.6,524.3 754.0,521.0 752.6,517.6 751.4,514.1 750.0,511.0 748.4,508.2 746.8,505.6 745.0,503.6 743.0,502.6 741.0,502.2 739.0,501.0 737.3,498.7 735.7,495.7 734.0,492.0 732.1,487.4 730.0,482.1 728.0,477.0 726.0,472.3 724.1,467.8 722.0,464.0 719.7,461.7 717.3,460.0 715.0,457.0 713.0,451.4 711.0,444.5 709.0,438.0 706.7,432.5 704.3,427.5 702.0,423.0 700.0,419.2 698.0,415.9 696.0,413.0 693.7,410.5 691.4,408.3 689.0,406.0 686.7,403.4 684.3,400.6 682.0,398.4 679.6,396.9 677.1,395.8 675.0,395.0 673.3,394.4 672.0,394.2 671.0,394.4 670.5,394.8 670.3,395.7 670.0,398.0 669.4,402.2 668.7,407.8 668.0,414.0 667.3,420.9 666.7,428.4 666.0,436.0 665.3,443.4 664.7,450.8 664.0,458.0 663.3,464.8 662.7,471.4 662.0,478.0 661.3,484.9 660.7,491.8 660.0,498.0 659.3,503.3 658.7,507.9 658.0,512.0 657.3,515.8 656.6,519.2 655.6,522.0 654.3,524.0 652.7,525.4 651.0,527.0 649.1,529.1 647.1,531.2 645.0,533.0 642.9,534.3 640.9,535.3 639.0,535.6 637.6,535.0 636.3,533.8 635.0,532.4 633.5,530.9 631.9,529.1 630.0,527.0 627.4,524.3 624.6,521.2 622.0,518.0 620.1,514.7 618.5,511.4 617.0,508.0 615.6,504.5 614.3,501.0 613.0,498.0 611.7,495.8 610.3,494.2 609.0,493.0 607.7,492.6 606.3,492.6 605.0,492.4 603.7,491.8 602.4,490.9 601.0,489.0 599.4,485.6 597.7,481.2 596.0,477.0 594.3,473.4 592.6,470.0 591.0,467.0 589.7,464.7 588.4,462.8 587.0,461.0 585.1,459.5 583.0,458.1 581.0,456.0 579.3,452.5 577.7,448.3 576.0,444.0 574.1,439.9 572.0,435.8 570.0,432.0 568.0,428.9 565.9,426.0 564.0,423.0 562.3,419.3 560.8,415.4 559.0,412.0 556.8,409.2 554.3,406.9 552.0,405.0 549.9,403.6 547.9,402.6 546.0,401.6 544.2,400.3 542.6,399.0 541.0,398.0 539.6,397.5 538.3,397.4 537.0,397.6 535.8,397.8 534.6,398.2 533.6,400.0 532.8,403.5 532.2,408.3 531.6,414.0 530.9,420.8 530.2,428.5 529.6,436.0 529.1,442.7 528.5,449.3 528.0,456.0 527.4,463.3 526.7,470.7 526.0,478.0 525.3,485.0 524.6,491.7 524.0,498.0 523.5,503.9 523.0,509.3 522.4,514.0 521.8,517.9 521.0,521.2 520.0,524.0 518.6,526.3 516.8,528.1 515.0,530.0 513.1,532.4 511.0,534.9 509.0,537.0 507.0,538.8 505.1,540.2 503.0,540.6 500.7,539.4 498.3,537.1 496.0,535.0 493.9,533.8 491.9,532.7 490.0,531.0 488.3,528.1 486.6,524.5 485.0,521.0 483.2,517.9 481.4,514.9 480.0,512.0 479.3,509.2 478.9,506.6 478.0,504.0 476.2,501.4 474.0,498.9 472.0,497.0 470.5,496.4 469.3,496.6 468.0,496.0 466.7,494.3 465.3,491.9 464.0,489.0 462.7,485.5 461.3,481.5 460.0,478.0 458.7,475.4 457.3,473.3 456.0,471.0 454.8,468.3 453.6,465.6 452.0,463.0 449.9,461.0 447.4,459.2 445.0,457.0 442.9,454.0 440.8,450.6 439.0,447.0 437.6,443.1 436.4,439.1 435.0,435.0 433.1,431.0 431.0,426.9 429.0,423.0 427.3,419.1 425.8,415.4 424.0,412.0 421.8,409.1 419.4,406.6 417.0,404.4 414.6,402.7 412.2,401.4 410.0,400.0 408.1,398.2 406.5,396.4 405.0,395.0 403.6,394.1 402.3,393.6 401.0,393.6 399.6,394.2 398.2,395.3 397.0,397.0 396.2,399.3 395.6,402.1 395.0,406.0 394.3,411.2 393.7,417.4 393.0,424.0 392.3,430.7 391.7,437.9 391.0,446.0 390.3,455.7 389.6,466.3 389.0,476.0 388.5,484.2 388.1,491.6 387.6,498.0 387.0,503.4 386.3,508.0 385.6,512.0 384.9,515.6 384.1,518.6 383.0,521.0 381.5,522.6 379.8,523.7 378.0,525.0 376.1,526.9 374.0,529.1 372.0,531.0 370.0,532.8 368.0,534.3 366.0,535.0 364.0,534.5 362.0,533.2 360.0,531.6 358.0,529.8 356.1,527.6 354.0,525.0 351.7,521.7 349.3,517.9 347.0,514.0 344.9,510.0 342.8,505.8 341.0,502.0 339.6,498.5 338.3,495.3 337.0,493.0 335.4,492.4 333.7,492.7 332.0,492.0 330.3,489.4 328.7,485.8 327.0,482.0 325.3,478.1 323.6,474.1 322.0,470.0 320.7,465.8 319.4,461.6 318.0,458.0 316.1,455.2 314.0,453.0 312.0,451.0 310.3,449.6 308.7,448.4 307.0,446.0 305.1,441.4 303.0,435.5 301.0,430.0 299.1,425.4 297.1,421.1 295.0,417.0 292.4,412.9 289.7,408.9 287.0,405.0 284.7,401.2 282.5,397.5 280.0,394.0 276.7,390.7 273.1,387.6 270.0,385.0 267.6,382.9 265.6,381.3 264.0,380.4 262.8,380.2 261.9,380.7 261.0,381.6 260.1,382.6 259.2,384.0 258.4,387.0 257.7,392.1 257.0,398.8 256.4,406.0 255.9,413.6 255.5,421.7 255.0,430.0 254.4,438.7 253.7,447.7 253.0,456.0 252.3,463.3 251.7,469.9 251.0,476.0 250.4,481.7 249.7,487.0 249.0,492.0 248.3,497.1 247.6,501.9 246.4,506.0 244.5,508.9 242.2,510.9 240.0,513.0 238.0,515.5 236.0,517.9 234.0,520.0 232.0,521.6 230.0,522.9 228.0,523.6 226.0,523.7 223.9,523.2 222.0,522.4 220.3,521.5 218.8,520.1 217.0,518.0 214.8,514.6 212.3,510.3 210.0,506.0 207.9,501.9 205.8,497.7 204.0,494.0 202.5,490.8 201.1,488.0 199.6,486.0 197.8,485.5 195.9,485.7 194.0,485.0 192.0,482.4 190.0,478.9 188.0,475.0 186.0,470.8 183.9,466.2 182.0,462.0 180.3,458.3 178.7,454.9 177.0,452.4 175.0,451.2 172.9,450.8 171.0,450.0 169.6,448.5 168.4,446.7 167.0,444.0 165.1,440.1 163.0,435.4 161.0,431.0 159.3,427.0 157.7,423.3 156.0,420.0 154.1,417.4 152.0,415.3 150.0,413.0 148.0,410.0 146.1,406.7 144.0,404.0 141.7,402.2 139.4,400.9 137.0,400.0 134.7,399.5 132.3,399.4 130.0,399.6 127.6,400.1 125.1,400.9 123.0,402.0 121.4,403.4 120.1,405.1 119.0,407.0 118.2,408.9 117.6,410.9 117.0,414.0 116.3,418.7 115.7,424.3 115.0,430.0 114.3,435.4 113.7,440.8 113.0,446.0 112.3,451.1 111.6,456.0 111.0,460.0 110.6,462.8 110.2,464.8 109.4,466.4 107.7,467.6 105.5,468.5 104.0,469.0" fill="none" stroke="#0000cc" stroke-width="1"/></g>
<text x="86" y="558.7" text-anchor="end" class="al">-4.0</text>
<text x="86" y="512.7" text-anchor="end" class="al">-2.0</text>
<text x="86" y="467.7" text-anchor="end" class="al">0.0</text>
<text x="86" y="421.7" text-anchor="end" class="al">2.0</text>
<text x="86" y="375.7" text-anchor="end" class="al">4.0</text>
<text x="86" y="330.7" text-anchor="end" class="al">6.0</text>
<text x="86" y="284.7" text-anchor="end" class="al">8.0</text>
<text x="86" y="238.7" text-anchor="end" class="al">10.0</text>
<text x="86" y="193.7" text-anchor="end" class="al">12.0</text>
<text x="86" y="147.7" text-anchor="end" class="al">14.0</text>
<text x="103.0" y="591" text-anchor="middle" class="al">0.0</text>
<text x="217.1" y="591" text-anchor="middle" class="al">1.0</text>
<text x="331.2" y="591" text-anchor="middle" class="al">2.0</text>
<text x="445.3" y="591" text-anchor="middle" class="al">3.0</text>
<text x="559.4" y="591" text-anchor="middle" class="al">4.0</text>
<text x="673.6" y="591" text-anchor="middle" class="al">5.0</text>
<text x="787.7" y="591" text-anchor="middle" class="al">6.0</text>
<text x="901.8" y="591" text-anchor="middle" class="al">7.0</text>
<text x="1015.9" y="591" text-anchor="middle" class="al">8.0</text>
<text x="1130.0" y="591" text-anchor="middle" class="al">9.0</text>
<text x="1244.2" y="591" text-anchor="middle" class="al">10.0</text>
<text x="574" y="611" class="al" style="fill:#ff0030" textLength="81">Force - Length</text>
<text x="676" y="611" class="al" style="fill:#ff0030" textLength="51">(N , mm)</text>
<rect x="1287" y="173" width="28" height="44" fill="#000"/>
<rect x="1284.500" y="170.500" width="27" height="43" fill="#fff" stroke="#000" shape-rendering="crispEdges"/>
<text x="1299" y="182" text-anchor="middle" class="al" style="fill:#f00">1</text>
<text x="1299" y="196" text-anchor="middle" class="al" style="fill:#48c0a0">2</text>
<text x="1299" y="210" text-anchor="middle" class="al" style="fill:#0000e0">3</text>
</svg>
<div id="grid" class="abs"><div id="ghead">
<div class="hc" style="left:0px;width:60px">No.<br></div>
<div class="hc" style="left:60px;width:100px">Area<br>mm²</div>
<div class="hc" style="left:160px;width:100px">Fmax<br>N</div>
<div class="hc" style="left:260px;width:100px">Stress Max<br>MPa</div>
<div class="hc" style="left:360px;width:100px">Len At Fmax<br>mm</div>
<div class="hc" style="left:460px;width:100px">Lmax<br>mm</div>
<div class="hc" style="left:560px;width:100px">At<br>%</div>
<div class="hc" style="left:660px;width:100px">Fmax Elong<br>Rate<br>%</div>
</div>
<div class="row" style="top:48px"></div>
<div class="rh" style="top:48px">1</div>
<div class="cell" style="left:60px;top:48px">25.000</div>
<div class="cell" style="left:160px;top:48px">13.2396</div>
<div class="cell" style="left:260px;top:48px">0.55</div>
<div class="cell" style="left:360px;top:48px">7.772</div>
<div class="cell" style="left:460px;top:48px">8.54</div>
<div class="cell" style="left:560px;top:48px">8.5</div>
<div class="cell" style="left:660px;top:48px">8</div>
<div class="row alt" style="top:68px"></div>
<div class="rh" style="top:68px">2</div>
<div class="cell" style="left:60px;top:68px">25.000</div>
<div class="cell" style="left:160px;top:68px">13.2370</div>
<div class="cell" style="left:260px;top:68px">0.55</div>
<div class="cell" style="left:360px;top:68px">7.760</div>
<div class="cell" style="left:460px;top:68px">8.54</div>
<div class="cell" style="left:560px;top:68px">8.5</div>
<div class="cell" style="left:660px;top:68px">8</div>
<div class="row" style="top:88px"></div>
<div class="rh" style="top:88px">3</div>
<div class="cell" style="left:60px;top:88px">25.000</div>
<div class="cell" style="left:160px;top:88px">13.2170</div>
<div class="cell" style="left:260px;top:88px">0.55</div>
<div class="cell" style="left:360px;top:88px">7.772</div>
<div class="cell" style="left:460px;top:88px">8.54</div>
<div class="cell" style="left:560px;top:88px">8.5</div>
<div class="cell" style="left:660px;top:88px">8</div>
<div class="row alt" style="top:108px"></div>
<div class="rh" style="top:108px"></div>
<div class="row" style="top:128px"></div>
<div class="rh" style="top:128px"></div>
<div class="row alt" style="top:148px"></div>
<div class="rh" style="top:148px"></div>
<div class="vl" style="left:59px"></div>
<div class="vl" style="left:159px"></div>
<div class="vl" style="left:259px"></div>
<div class="vl" style="left:359px"></div>
<div class="vl" style="left:459px"></div>
<div class="vl" style="left:559px"></div>
<div class="vl" style="left:659px"></div>
<div class="vl" style="left:759px"></div>
</div>
<div class="abs" style="left:1302px;top:642px;width:18px;height:156px;background:#f4f4f4;background-image:repeating-conic-gradient(#fff 0 25%,#e4e4e4 0 50%);background-size:2px 2px"></div>
<div class="abs sb" style="left:1302px;top:642px;height:17px"><i class="tri up"></i></div>
<div class="abs sb" style="left:1302px;top:659px;height:64px"></div>
<div class="abs sb" style="left:1302px;top:781px;height:17px"><i class="tri dn"></i></div>
<div class="abs" style="left:1324px;top:640px;width:21px;height:166px;background:#f0f0f0"></div>
<div class="abs" style="left:1324px;top:685px;width:19px;height:71px;border:1px solid #696969;border-left-color:#fff;border-top-color:#fff;border-radius:0 3px 3px 0;background:#f2f2f2"></div>
<div class="abs vtx" style="left:1341px;top:642px">Result</div>
<div class="abs vtx" style="left:1339px;top:689px;letter-spacing:0.75px">Curve mark</div>
<div class="abs" style="left:1px;top:634px;width:1323px;height:168px;border:1px solid #fff;border-top-color:#e0e0e0;border-left-color:#e0e0e0;pointer-events:none"></div>
<svg class="abs" style="left:1344px;top:109px" width="257" height="697" viewBox="1344 109 257 697"><defs>
<filter id="brush" x="0" y="0" width="100%" height="100%"><feTurbulence type="fractalNoise" baseFrequency="0.012 0.55" numOctaves="2" seed="7"/><feColorMatrix type="matrix" values="0 0 0 0 0.285  0 0 0 0 0.285  0 0 0 0 0.285  0.55 0 0 0 -0.12"/></filter>
<filter id="brush2" x="0" y="0" width="100%" height="100%"><feTurbulence type="fractalNoise" baseFrequency="0.02 0.9" numOctaves="1" seed="11"/><feColorMatrix type="matrix" values="0 0 0 0 0.42  0 0 0 0 0.42  0 0 0 0 0.42  0.9 0 0 0 -0.28"/></filter>
<linearGradient id="botl" x1="0" y1="0" x2="0" y2="1"><stop offset="0" stop-color="#808080" stop-opacity="0"/><stop offset="0.55" stop-color="#8a8a8a" stop-opacity="0.45"/><stop offset="1" stop-color="#a0a0a0" stop-opacity="0.9"/></linearGradient>
<radialGradient id="wheel" cx="1471.500" cy="672.500" r="126" gradientUnits="userSpaceOnUse">
<stop offset="0.397" stop-color="#121212"/><stop offset="0.444" stop-color="#151515"/><stop offset="0.46" stop-color="#202020"/>
<stop offset="0.524" stop-color="#2e2e2e"/><stop offset="0.603" stop-color="#3a3a3a"/><stop offset="0.714" stop-color="#424242"/>
<stop offset="0.825" stop-color="#3c3c3c"/><stop offset="0.857" stop-color="#343434"/><stop offset="0.889" stop-color="#2c2c2c"/><stop offset="0.903" stop-color="#2e2e2e"/>
<stop offset="0.911" stop-color="#484848"/><stop offset="0.943" stop-color="#4c4c4c"/><stop offset="0.949" stop-color="#1e1e1e"/><stop offset="0.976" stop-color="#1e1e1e"/><stop offset="0.985" stop-color="#3c3c3c"/><stop offset="1" stop-color="#4a4a4a"/>
</radialGradient>
<linearGradient id="wlight" x1="0.150" y1="0" x2="0.850" y2="1"><stop offset="0" stop-color="#000" stop-opacity="0.12"/><stop offset="0.5" stop-color="#000" stop-opacity="0"/><stop offset="0.85" stop-color="#fff" stop-opacity="0.05"/><stop offset="1" stop-color="#fff" stop-opacity="0.22"/></linearGradient>
<radialGradient id="redb" cx="1477.500" cy="680" r="61" gradientUnits="userSpaceOnUse">
<stop offset="0" stop-color="#7b0f0f"/><stop offset="0.72" stop-color="#7a0f0f"/><stop offset="0.80" stop-color="#6c0c0c"/><stop offset="0.86" stop-color="#8a2a2a"/><stop offset="0.93" stop-color="#b87070"/><stop offset="1" stop-color="#d8b0b0"/></radialGradient>
<linearGradient id="redhl" x1="0.3" y1="0" x2="0.6" y2="0.5"><stop offset="0" stop-color="#f0c0c0" stop-opacity="0.85"/><stop offset="0.5" stop-color="#d08080" stop-opacity="0.3"/><stop offset="1" stop-color="#a04040" stop-opacity="0"/></linearGradient>
<filter id="blur3" x="-10%" y="-10%" width="120%" height="130%"><feGaussianBlur stdDeviation="2.500"/></filter><linearGradient id="rimg" x1="0" y1="0" x2="0.250" y2="1"><stop offset="0" stop-color="#777" stop-opacity="0"/><stop offset="0.5" stop-color="#777" stop-opacity="0"/><stop offset="0.75" stop-color="#757575" stop-opacity="0.7"/><stop offset="1" stop-color="#808080" stop-opacity="1"/></linearGradient><linearGradient id="redge" x1="0" y1="0" x2="0" y2="1"><stop offset="0" stop-color="#000" stop-opacity="0"/><stop offset="0.6" stop-color="#000" stop-opacity="0.6"/><stop offset="1" stop-color="#000" stop-opacity="1"/></linearGradient><linearGradient id="tbar" x1="0" y1="0" x2="0" y2="1"><stop offset="0" stop-color="#c8c8c8"/><stop offset="0.25" stop-color="#9a9a9a"/><stop offset="1" stop-color="#7c7c7c"/></linearGradient>
<linearGradient id="btn" x1="0" y1="0" x2="0" y2="1"><stop offset="0" stop-color="#303030"/><stop offset="0.35" stop-color="#0a0a0a"/><stop offset="1" stop-color="#060606"/></linearGradient>
</defs><rect x="1346" y="111" width="252" height="692" fill="#484848"/><rect x="1346" y="111" width="252" height="692" filter="url(#brush)"/><rect x="1346" y="111" width="252" height="692" filter="url(#brush2)" opacity="0.35"/><rect x="1346" y="700" width="252" height="100" fill="url(#botl)"/><rect x="1344" y="109" width="3" height="694" fill="#b8b8b8"/><rect x="1346" y="111" width="1" height="692" fill="#8a8a8a"/><rect x="1347" y="111" width="1" height="692" fill="#606060"/><rect x="1595" y="640" width="3" height="163" fill="url(#redge)"/><rect x="1598" y="59" width="2" height="747" fill="#f4f4f4"/><rect x="1600" y="59" width="1" height="747" fill="#26361e"/><rect x="1347" y="111" width="250" height="7" fill="url(#tbar)"/><rect x="1347" y="118" width="250" height="6" fill="#0c0c0c"/><rect x="1347" y="124" width="250" height="1" fill="#2a2a2a"/><rect x="1346" y="800" width="252" height="3" fill="#000"/><rect x="1346" y="803" width="255" height="3" fill="#f8f8f8"/><rect x="1356" y="133" width="159" height="27" fill="none"/><path d="M1356.5 160V133.5H1515" fill="none" stroke="#b4b4b4" shape-rendering="crispEdges"/><path d="M1356.5 159.5H1514.5V133.5" fill="none" stroke="#fff" shape-rendering="crispEdges"/><rect x="1359" y="139" width="16" height="15" fill="#000"/><text x="1397" y="151" font-family="Liberation Serif,serif" font-size="13.500" fill="#80ff00" textLength="73" lengthAdjust="spacing">Standby ...</text><rect x="1525" y="133" width="27" height="27" fill="none"/><path d="M1525.5 160V133.5H1552" fill="none" stroke="#b4b4b4" shape-rendering="crispEdges"/><path d="M1525.5 159.5H1551.5V133.5" fill="none" stroke="#fff" shape-rendering="crispEdges"/><rect x="1558" y="133" width="27" height="27" fill="none"/><path d="M1558.5 160V133.5H1585" fill="none" stroke="#b4b4b4" shape-rendering="crispEdges"/><path d="M1558.5 159.5H1584.5V133.5" fill="none" stroke="#fff" shape-rendering="crispEdges"/><rect x="1563" y="139" width="16" height="15" fill="#000"/><rect x="1356" y="165" width="229" height="219" fill="#404040"/><path d="M1356.5 384V165.5H1585" fill="none" stroke="#b4b4b4" shape-rendering="crispEdges"/><path d="M1356.5 383.5H1584.5V165.5" fill="none" stroke="#fff" shape-rendering="crispEdges"/><rect x="1352" y="398" width="107" height="33" rx="16.500" fill="#3a3a3a"/><rect x="1352" y="400" width="107" height="32" rx="16" fill="#6e6e6e" opacity="0.55"/><rect x="1353" y="399" width="105" height="31" rx="15.500" fill="url(#btn)" stroke="#1a1a1a"/><clipPath id="c1353399"><rect x="1353" y="406" width="105" height="17.600"/></clipPath><text x="1361" y="418" font-family="Liberation Sans,sans-serif" font-size="11.700" fill="#fff">ZERO</text><rect x="1481" y="398" width="107" height="33" rx="16.500" fill="#3a3a3a"/><rect x="1481" y="400" width="107" height="32" rx="16" fill="#6e6e6e" opacity="0.55"/><rect x="1482" y="399" width="105" height="31" rx="15.500" fill="url(#btn)" stroke="#1a1a1a"/><clipPath id="c1482399"><rect x="1482" y="406" width="105" height="17.600"/></clipPath><text x="1490" y="418" font-family="Liberation Sans,sans-serif" font-size="11.700" fill="#fff">POS ZERO</text><rect x="1352" y="431" width="107" height="33" rx="16.500" fill="#3a3a3a"/><rect x="1352" y="433" width="107" height="32" rx="16" fill="#6e6e6e" opacity="0.55"/><rect x="1353" y="432" width="105" height="31" rx="15.500" fill="url(#btn)" stroke="#1a1a1a"/><clipPath id="c1353432"><rect x="1353" y="439" width="105" height="17.600"/></clipPath><text x="1361" y="451" font-family="Liberation Sans,sans-serif" font-size="11.700" fill="#fff">FORCE ZERO</text><rect x="1481" y="431" width="107" height="33" rx="16.500" fill="#3a3a3a"/><rect x="1481" y="433" width="107" height="32" rx="16" fill="#6e6e6e" opacity="0.55"/><rect x="1482" y="432" width="105" height="31" rx="15.500" fill="url(#btn)" stroke="#1a1a1a"/><clipPath id="c1482432"><rect x="1482" y="439" width="105" height="17.600"/></clipPath><g clip-path="url(#c1482432)"><text x="1490" y="444.5" font-family="Liberation Sans,sans-serif" font-size="11.700" fill="#fff">LENGTH</text><text x="1490" y="459" font-family="Liberation Sans,sans-serif" font-size="11.700" fill="#fff">ZERO</text></g><rect x="1352" y="465" width="107" height="33" rx="16.500" fill="#3a3a3a"/><rect x="1352" y="467" width="107" height="32" rx="16" fill="#6e6e6e" opacity="0.55"/><rect x="1353" y="466" width="105" height="31" rx="15.500" fill="url(#btn)" stroke="#1a1a1a"/><clipPath id="c1353466"><rect x="1353" y="473" width="105" height="17.600"/></clipPath><g clip-path="url(#c1353466)"><text x="1361" y="478.5" font-family="Liberation Sans,sans-serif" font-size="11.700" fill="#5c5c5c">EXTEN</text><text x="1361" y="493" font-family="Liberation Sans,sans-serif" font-size="11.700" fill="#5c5c5c">CHANGE</text></g><rect x="1481" y="465" width="107" height="33" rx="16.500" fill="#3a3a3a"/><rect x="1481" y="467" width="107" height="32" rx="16" fill="#6e6e6e" opacity="0.55"/><rect x="1482" y="466" width="105" height="31" rx="15.500" fill="url(#btn)" stroke="#1a1a1a"/><clipPath id="c1482466"><rect x="1482" y="473" width="105" height="17.600"/></clipPath><text x="1490" y="485" font-family="Liberation Sans,sans-serif" font-size="11.700" fill="#5c5c5c">Manu Catch</text><text x="1358" y="524" font-family="Liberation Serif,serif" font-size="12" fill="#fff" textLength="90" lengthAdjust="spacing">Return Position</text><text x="1535" y="527" font-family="Liberation Serif,serif" font-size="12" fill="#6a6a6a" textLength="48" lengthAdjust="spacing">Catch ID</text><text x="1534" y="526" font-family="Liberation Serif,serif" font-size="12" fill="#181818" textLength="48" lengthAdjust="spacing">Catch ID</text><rect x="1356" y="533" width="47" height="20" fill="#fff"/><rect x="1357.500" y="534.500" width="44" height="17" fill="#f4f4f4" stroke="#8a8a8a"/><text x="1379.500" y="548" text-anchor="middle" font-family="Liberation Sans,sans-serif" font-size="12" fill="#000">0</text><rect x="1532" y="532" width="50" height="21" fill="#fff"/><rect x="1533.500" y="533.500" width="47" height="18" fill="#f4f4f4" stroke="#a0a0a0"/><text x="1537" y="548" font-family="Liberation Sans,sans-serif" font-size="12" fill="#8a8a8a">1</text><rect x="1564.500" y="534.500" width="15" height="8" fill="#f0f0f0" stroke="#c0c0c0"/><rect x="1564.500" y="543.500" width="15" height="8" fill="#f0f0f0" stroke="#c0c0c0"/><path d="M1569.500 540l2.500-3 2.500 3zM1569.500 546l2.500 3 2.500-3z" fill="#8a8a8a"/><clipPath id="rpclip"><rect x="1346" y="111" width="252" height="689"/></clipPath><g clip-path="url(#rpclip)"><circle cx="1474" cy="680.500" r="126" fill="#000" opacity="0.5" filter="url(#blur3)"/><circle cx="1471.500" cy="672.500" r="126" fill="url(#wheel)"/><circle cx="1471.500" cy="672.500" r="121.200" fill="none" stroke="url(#rimg)" stroke-width="4.500"/><circle cx="1471.500" cy="672.500" r="126" fill="url(#wlight)"/><circle cx="1471.500" cy="672.400" r="52" fill="url(#redb)"/><circle cx="1470.300" cy="670.400" r="43.500" fill="none" stroke="#c01818" stroke-width="0.800" stroke-dasharray="2 3 1 2" opacity="0.8"/></g><path d="M1464.08 654.8H1476.92L1486 663.883V676.717L1476.92 685.8H1464.08L1455 676.717V663.883Z" fill="#300000" transform="translate(1,1)"/><path d="M1464.08 654.8H1476.92L1486 663.883V676.717L1476.92 685.8H1464.08L1455 676.717V663.883Z" fill="#ff0000"/><path d="M1465.08 656.3H1475.92" stroke="#fff" stroke-width="1"/><text x="1458" y="676.300" font-family="Liberation Sans,sans-serif" font-weight="bold" font-size="16" fill="#fff" textLength="25.500" lengthAdjust="spacingAndGlyphs">STOP</text><path d="M1470.5 573L1480.5 583.5H1475V597H1466V583.5H1460.5Z" fill="#8a8a8a" transform="translate(1.500,1.500)"/><path d="M1470.5 573L1480.5 583.5H1475V597H1466V583.5H1460.5Z" fill="#ff0000" stroke="#000" stroke-width="0.600"/><path d="M1464.500 583l6-7" fill="none" stroke="#fff" stroke-width="0.800"/><path d="M1470.5 579.5L1480.5 590H1475V597H1466V590H1460.5Z" fill="#8a8a8a" transform="translate(1.500,1.500)"/><path d="M1470.5 579.5L1480.5 590H1475V597H1466V590H1460.5Z" fill="#ff0000" stroke="#000" stroke-width="0.600"/><path d="M1464.500 589.500l6-7M1468 591v5" fill="none" stroke="#fff" stroke-width="0.800"/><path d="M1539.5 600L1551.5 613H1545V623.5H1534V613H1527.5Z" fill="#8a8a8a" transform="translate(1.500,1.500)"/><path d="M1539.5 600L1551.5 613H1545V623.5H1534V613H1527.5Z" fill="#ff0000" stroke="#000" stroke-width="0.600"/><path d="M1531.500 612l8-9.500M1537 614v8" fill="none" stroke="#fff" stroke-width="0.800"/><path d="M1540 747.5L1552.5 735.5H1545.5V725H1534.5V735.5H1527.5Z" fill="#8a8a8a" transform="translate(1.500,1.500)"/><path d="M1540 747.5L1552.5 735.5H1545.5V725H1534.5V735.5H1527.5Z" fill="#ff0000" stroke="#000" stroke-width="0.600"/><path d="M1536.500 735v-8.500h7M1529.500 736.500h5" fill="none" stroke="#fff" stroke-width="0.800"/><path d="M1470.5 769.5L1481 759.5H1476V750.5H1465V759.5H1460Z" fill="#8a8a8a" transform="translate(1.500,1.500)"/><path d="M1470.5 769.5L1481 759.5H1476V750.5H1465V759.5H1460Z" fill="#ff0000" stroke="#000" stroke-width="0.600"/><path d="M1467 759v-7.500h7" fill="none" stroke="#fff" stroke-width="0.800"/><path d="M1470.5 775.5L1481 765.5H1476V762H1465V765.5H1460Z" fill="#8a8a8a" transform="translate(1.500,1.500)"/><path d="M1470.5 775.5L1481 765.5H1476V762H1465V765.5H1460Z" fill="#ff0000" stroke="#000" stroke-width="0.600"/><path d="M1462 766.500h4" fill="none" stroke="#fff" stroke-width="0.800"/><path d="M1373 659.500v22l12.500-11z" fill="#ff0000"/><path d="M1374.500 663v12" stroke="#fff" stroke-width="0.800"/><path d="M1374 682l12-10.500" stroke="#888" stroke-width="1"/><rect x="1554.500" y="664" width="6.500" height="14" fill="#8c8c8c" stroke="#b8b8b8" stroke-width="0.700"/><rect x="1563.500" y="664" width="6.500" height="14" fill="#8c8c8c" stroke="#b8b8b8" stroke-width="0.700"/><path d="M1557 666v10M1566 666v10" stroke="#a8a8a8"/><g transform="translate(1400,600)"><path d="M0 3.500L3.500 0H12L15 3V3.800H17V5.500L11.200 11.500L8.300 8.600V15.300H14.800V23L11.800 26H3.800L0 22.300Z" fill="#000"/><path d="M1 4L3.800 1.200L6.200 3.200V23L3.800 24.800L1 22Z" fill="#8c0000"/><path d="M5 1H11.600L14 3.400V4.600H6.500V3Z" fill="#ff0000"/><path d="M5.500 4.500H16L11.200 10.200Z" fill="#ff0000"/><path d="M8.500 16.300H13.800V22.600L11.400 25H5L7.500 23Z" fill="#ff0000"/></g><g transform="translate(1400,722)"><path d="M0 3.500L3.500 0H12L15 3V3.800H17V5.500L11.200 11.500L8.300 8.600V15.300H14.800V23L11.800 26H3.800L0 22.300Z" fill="#000"/><path d="M1 4L3.800 1.200L6.200 3.200V23L3.800 24.800L1 22Z" fill="#8c0000"/><path d="M5 1H11.600L14 3.400V4.600H6.500V3Z" fill="#ff0000"/><path d="M5.500 4.500H16L11.200 10.200Z" fill="#ff0000"/><path d="M8.500 16.300H13.800V22.600L11.400 25H5L7.500 23Z" fill="#ff0000"/></g><rect x="1387.500" y="600" width="5.500" height="25" fill="#000"/><path d="M1388.500 602h3.500M1388.500 604.900h3.500M1388.500 607.800h3.500M1388.500 610.700h3.500M1388.500 616.500h3.500M1388.500 619.400h3.500M1388.500 622.300h3.500" stroke="#e4e4e4" stroke-width="1.900"/><path d="M1387.500 612.700h5.500" stroke="#ff0000" stroke-width="1.300"/><ellipse cx="1397" cy="612.500" rx="1.700" ry="3" fill="none" stroke="#f00" stroke-width="1"/><path d="M1394.600 724v18M1392 724.800h5.200M1392 741h5.200" stroke="#000" stroke-width="1.700"/><rect x="1385.700" y="728.900" width="17.800" height="8" rx="4" fill="#4c4c4c" stroke="#000" stroke-width="1.500"/><ellipse cx="1394.500" cy="733" rx="2.800" ry="2.500" fill="#f4f4f4"/><path d="M1394.500 731.300v1.800" stroke="#000" stroke-width="0.900"/></svg>
<div id="status" class="abs"><svg class="abs" style="left:2px;top:4px" width="6" height="22"><g fill="#e8ecf0"><rect x="1" y="1" width="2" height="2"/><rect x="1" y="5" width="2" height="2"/><rect x="1" y="9" width="2" height="2"/><rect x="1" y="13" width="2" height="2"/><rect x="1" y="17" width="2" height="2"/></g></svg>
 <span style="left:133px;top:6px;font-weight:bold;font-size:14px">Standby</span>
 <div class="sep" style="left:310px"></div>
 <span style="left:376px;top:7px;font-weight:bold;font-size:12px">0.0</span>
 <div class="sep" style="left:460px"></div>
 <span style="left:552px;top:5px;font-size:16px;letter-spacing:-0.42px">3&nbsp; Specimens Tested ,&nbsp;&nbsp;&nbsp;&nbsp; 3 Specimens Inputted</span>
 <div class="sep" style="left:960px"></div>
</div>
</body></html>
